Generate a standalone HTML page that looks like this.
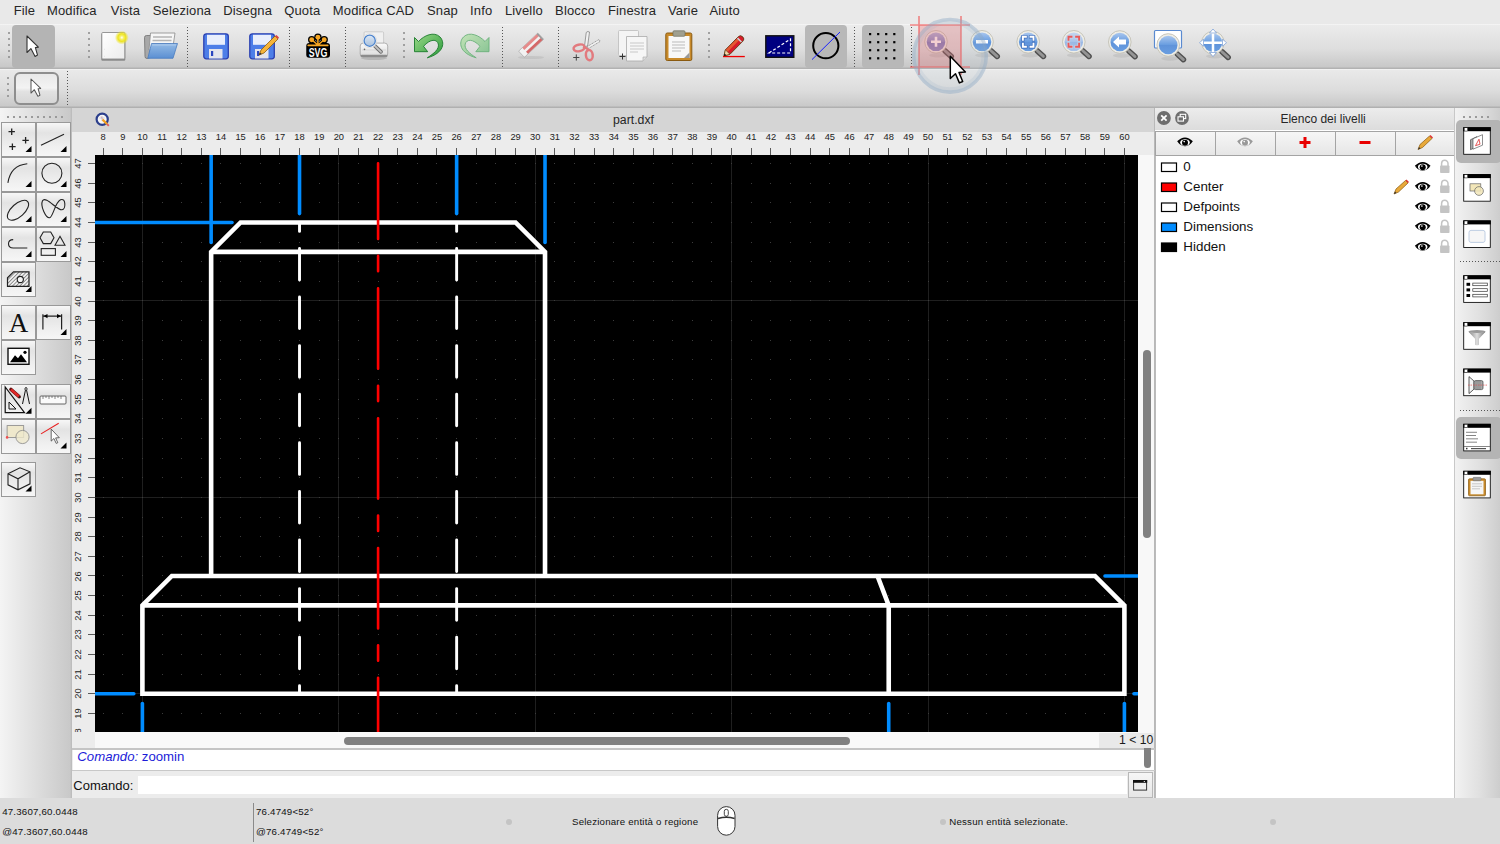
<!DOCTYPE html><html><head><meta charset="utf-8"><style>
*{margin:0;padding:0;box-sizing:border-box}
html,body{width:1500px;height:844px;overflow:hidden;background:#ececec;font-family:"Liberation Sans",sans-serif;color:#222}
.a{position:absolute}
svg{position:absolute;overflow:visible}
.menu span{position:absolute;top:3px;font-size:13px;color:#262626;white-space:nowrap;letter-spacing:0.15px}
</style></head><body><div class="a menu" style="left:0;top:0;width:1500px;height:24px;background:#e9e9e9"><span style="left:13.7px">File</span><span style="left:47.0px">Modifica</span><span style="left:110.8px">Vista</span><span style="left:152.8px">Seleziona</span><span style="left:223.3px">Disegna</span><span style="left:284.2px">Quota</span><span style="left:332.8px">Modifica CAD</span><span style="left:427.0px">Snap</span><span style="left:470.1px">Info</span><span style="left:504.9px">Livello</span><span style="left:555.1px">Blocco</span><span style="left:607.9px">Finestra</span><span style="left:667.9px">Varie</span><span style="left:709.5px">Aiuto</span></div><div class="a" style="left:0;top:24px;width:1500px;height:45px;background:linear-gradient(#f8f8f8 0,#ebebeb 1.5px,#dedede 25px,#c8c8c8 43px,#b2b2b2 44px)"></div><div class="a" style="left:0;top:69px;width:1500px;height:39px;background:linear-gradient(#f6f6f6 0,#e9e9e9 1.5px,#dcdcdc 22px,#c9c9c9 37px,#b0b0b0 38px)"></div><div class="a" style="left:7.5px;top:32.0px;width:2.0px;height:2.0px;background:#8a8a8a;border-radius:1px"></div><div class="a" style="left:7.5px;top:38.0px;width:2.0px;height:2.0px;background:#8a8a8a;border-radius:1px"></div><div class="a" style="left:7.5px;top:44.0px;width:2.0px;height:2.0px;background:#8a8a8a;border-radius:1px"></div><div class="a" style="left:7.5px;top:50.0px;width:2.0px;height:2.0px;background:#8a8a8a;border-radius:1px"></div><div class="a" style="left:7.5px;top:56.0px;width:2.0px;height:2.0px;background:#8a8a8a;border-radius:1px"></div><div class="a" style="left:87.8px;top:32.0px;width:2.0px;height:2.0px;background:#8a8a8a;border-radius:1px"></div><div class="a" style="left:87.8px;top:38.0px;width:2.0px;height:2.0px;background:#8a8a8a;border-radius:1px"></div><div class="a" style="left:87.8px;top:44.0px;width:2.0px;height:2.0px;background:#8a8a8a;border-radius:1px"></div><div class="a" style="left:87.8px;top:50.0px;width:2.0px;height:2.0px;background:#8a8a8a;border-radius:1px"></div><div class="a" style="left:87.8px;top:56.0px;width:2.0px;height:2.0px;background:#8a8a8a;border-radius:1px"></div><div class="a" style="left:187px;top:27px;width:1px;height:1px;background:#555"></div><div class="a" style="left:187px;top:30px;width:1px;height:1px;background:#555"></div><div class="a" style="left:187px;top:33px;width:1px;height:1px;background:#555"></div><div class="a" style="left:187px;top:36px;width:1px;height:1px;background:#555"></div><div class="a" style="left:187px;top:39px;width:1px;height:1px;background:#555"></div><div class="a" style="left:187px;top:42px;width:1px;height:1px;background:#555"></div><div class="a" style="left:187px;top:45px;width:1px;height:1px;background:#555"></div><div class="a" style="left:187px;top:48px;width:1px;height:1px;background:#555"></div><div class="a" style="left:187px;top:51px;width:1px;height:1px;background:#555"></div><div class="a" style="left:187px;top:54px;width:1px;height:1px;background:#555"></div><div class="a" style="left:187px;top:57px;width:1px;height:1px;background:#555"></div><div class="a" style="left:187px;top:60px;width:1px;height:1px;background:#555"></div><div class="a" style="left:187px;top:63px;width:1px;height:1px;background:#555"></div><div class="a" style="left:187px;top:66px;width:1px;height:1px;background:#555"></div><div class="a" style="left:289px;top:27px;width:1px;height:1px;background:#555"></div><div class="a" style="left:289px;top:30px;width:1px;height:1px;background:#555"></div><div class="a" style="left:289px;top:33px;width:1px;height:1px;background:#555"></div><div class="a" style="left:289px;top:36px;width:1px;height:1px;background:#555"></div><div class="a" style="left:289px;top:39px;width:1px;height:1px;background:#555"></div><div class="a" style="left:289px;top:42px;width:1px;height:1px;background:#555"></div><div class="a" style="left:289px;top:45px;width:1px;height:1px;background:#555"></div><div class="a" style="left:289px;top:48px;width:1px;height:1px;background:#555"></div><div class="a" style="left:289px;top:51px;width:1px;height:1px;background:#555"></div><div class="a" style="left:289px;top:54px;width:1px;height:1px;background:#555"></div><div class="a" style="left:289px;top:57px;width:1px;height:1px;background:#555"></div><div class="a" style="left:289px;top:60px;width:1px;height:1px;background:#555"></div><div class="a" style="left:289px;top:63px;width:1px;height:1px;background:#555"></div><div class="a" style="left:289px;top:66px;width:1px;height:1px;background:#555"></div><div class="a" style="left:345px;top:27px;width:1px;height:1px;background:#555"></div><div class="a" style="left:345px;top:30px;width:1px;height:1px;background:#555"></div><div class="a" style="left:345px;top:33px;width:1px;height:1px;background:#555"></div><div class="a" style="left:345px;top:36px;width:1px;height:1px;background:#555"></div><div class="a" style="left:345px;top:39px;width:1px;height:1px;background:#555"></div><div class="a" style="left:345px;top:42px;width:1px;height:1px;background:#555"></div><div class="a" style="left:345px;top:45px;width:1px;height:1px;background:#555"></div><div class="a" style="left:345px;top:48px;width:1px;height:1px;background:#555"></div><div class="a" style="left:345px;top:51px;width:1px;height:1px;background:#555"></div><div class="a" style="left:345px;top:54px;width:1px;height:1px;background:#555"></div><div class="a" style="left:345px;top:57px;width:1px;height:1px;background:#555"></div><div class="a" style="left:345px;top:60px;width:1px;height:1px;background:#555"></div><div class="a" style="left:345px;top:63px;width:1px;height:1px;background:#555"></div><div class="a" style="left:345px;top:66px;width:1px;height:1px;background:#555"></div><div class="a" style="left:402.6px;top:32.0px;width:2.0px;height:2.0px;background:#8a8a8a;border-radius:1px"></div><div class="a" style="left:402.6px;top:38.0px;width:2.0px;height:2.0px;background:#8a8a8a;border-radius:1px"></div><div class="a" style="left:402.6px;top:44.0px;width:2.0px;height:2.0px;background:#8a8a8a;border-radius:1px"></div><div class="a" style="left:402.6px;top:50.0px;width:2.0px;height:2.0px;background:#8a8a8a;border-radius:1px"></div><div class="a" style="left:402.6px;top:56.0px;width:2.0px;height:2.0px;background:#8a8a8a;border-radius:1px"></div><div class="a" style="left:502px;top:27px;width:1px;height:1px;background:#555"></div><div class="a" style="left:502px;top:30px;width:1px;height:1px;background:#555"></div><div class="a" style="left:502px;top:33px;width:1px;height:1px;background:#555"></div><div class="a" style="left:502px;top:36px;width:1px;height:1px;background:#555"></div><div class="a" style="left:502px;top:39px;width:1px;height:1px;background:#555"></div><div class="a" style="left:502px;top:42px;width:1px;height:1px;background:#555"></div><div class="a" style="left:502px;top:45px;width:1px;height:1px;background:#555"></div><div class="a" style="left:502px;top:48px;width:1px;height:1px;background:#555"></div><div class="a" style="left:502px;top:51px;width:1px;height:1px;background:#555"></div><div class="a" style="left:502px;top:54px;width:1px;height:1px;background:#555"></div><div class="a" style="left:502px;top:57px;width:1px;height:1px;background:#555"></div><div class="a" style="left:502px;top:60px;width:1px;height:1px;background:#555"></div><div class="a" style="left:502px;top:63px;width:1px;height:1px;background:#555"></div><div class="a" style="left:502px;top:66px;width:1px;height:1px;background:#555"></div><div class="a" style="left:558px;top:27px;width:1px;height:1px;background:#555"></div><div class="a" style="left:558px;top:30px;width:1px;height:1px;background:#555"></div><div class="a" style="left:558px;top:33px;width:1px;height:1px;background:#555"></div><div class="a" style="left:558px;top:36px;width:1px;height:1px;background:#555"></div><div class="a" style="left:558px;top:39px;width:1px;height:1px;background:#555"></div><div class="a" style="left:558px;top:42px;width:1px;height:1px;background:#555"></div><div class="a" style="left:558px;top:45px;width:1px;height:1px;background:#555"></div><div class="a" style="left:558px;top:48px;width:1px;height:1px;background:#555"></div><div class="a" style="left:558px;top:51px;width:1px;height:1px;background:#555"></div><div class="a" style="left:558px;top:54px;width:1px;height:1px;background:#555"></div><div class="a" style="left:558px;top:57px;width:1px;height:1px;background:#555"></div><div class="a" style="left:558px;top:60px;width:1px;height:1px;background:#555"></div><div class="a" style="left:558px;top:63px;width:1px;height:1px;background:#555"></div><div class="a" style="left:558px;top:66px;width:1px;height:1px;background:#555"></div><div class="a" style="left:708.0px;top:32.0px;width:2.0px;height:2.0px;background:#8a8a8a;border-radius:1px"></div><div class="a" style="left:708.0px;top:38.0px;width:2.0px;height:2.0px;background:#8a8a8a;border-radius:1px"></div><div class="a" style="left:708.0px;top:44.0px;width:2.0px;height:2.0px;background:#8a8a8a;border-radius:1px"></div><div class="a" style="left:708.0px;top:50.0px;width:2.0px;height:2.0px;background:#8a8a8a;border-radius:1px"></div><div class="a" style="left:708.0px;top:56.0px;width:2.0px;height:2.0px;background:#8a8a8a;border-radius:1px"></div><div class="a" style="left:854px;top:27px;width:1px;height:1px;background:#555"></div><div class="a" style="left:854px;top:30px;width:1px;height:1px;background:#555"></div><div class="a" style="left:854px;top:33px;width:1px;height:1px;background:#555"></div><div class="a" style="left:854px;top:36px;width:1px;height:1px;background:#555"></div><div class="a" style="left:854px;top:39px;width:1px;height:1px;background:#555"></div><div class="a" style="left:854px;top:42px;width:1px;height:1px;background:#555"></div><div class="a" style="left:854px;top:45px;width:1px;height:1px;background:#555"></div><div class="a" style="left:854px;top:48px;width:1px;height:1px;background:#555"></div><div class="a" style="left:854px;top:51px;width:1px;height:1px;background:#555"></div><div class="a" style="left:854px;top:54px;width:1px;height:1px;background:#555"></div><div class="a" style="left:854px;top:57px;width:1px;height:1px;background:#555"></div><div class="a" style="left:854px;top:60px;width:1px;height:1px;background:#555"></div><div class="a" style="left:854px;top:63px;width:1px;height:1px;background:#555"></div><div class="a" style="left:854px;top:66px;width:1px;height:1px;background:#555"></div><div class="a" style="left:911px;top:27px;width:1px;height:1px;background:#555"></div><div class="a" style="left:911px;top:30px;width:1px;height:1px;background:#555"></div><div class="a" style="left:911px;top:33px;width:1px;height:1px;background:#555"></div><div class="a" style="left:911px;top:36px;width:1px;height:1px;background:#555"></div><div class="a" style="left:911px;top:39px;width:1px;height:1px;background:#555"></div><div class="a" style="left:911px;top:42px;width:1px;height:1px;background:#555"></div><div class="a" style="left:911px;top:45px;width:1px;height:1px;background:#555"></div><div class="a" style="left:911px;top:48px;width:1px;height:1px;background:#555"></div><div class="a" style="left:911px;top:51px;width:1px;height:1px;background:#555"></div><div class="a" style="left:911px;top:54px;width:1px;height:1px;background:#555"></div><div class="a" style="left:911px;top:57px;width:1px;height:1px;background:#555"></div><div class="a" style="left:911px;top:60px;width:1px;height:1px;background:#555"></div><div class="a" style="left:911px;top:63px;width:1px;height:1px;background:#555"></div><div class="a" style="left:911px;top:66px;width:1px;height:1px;background:#555"></div><div class="a" style="left:6.9px;top:77.0px;width:2.0px;height:2.0px;background:#8a8a8a;border-radius:1px"></div><div class="a" style="left:6.9px;top:83.0px;width:2.0px;height:2.0px;background:#8a8a8a;border-radius:1px"></div><div class="a" style="left:6.9px;top:89.0px;width:2.0px;height:2.0px;background:#8a8a8a;border-radius:1px"></div><div class="a" style="left:6.9px;top:95.0px;width:2.0px;height:2.0px;background:#8a8a8a;border-radius:1px"></div><div class="a" style="left:67px;top:71px;width:1px;height:1px;background:#555"></div><div class="a" style="left:67px;top:74px;width:1px;height:1px;background:#555"></div><div class="a" style="left:67px;top:77px;width:1px;height:1px;background:#555"></div><div class="a" style="left:67px;top:80px;width:1px;height:1px;background:#555"></div><div class="a" style="left:67px;top:83px;width:1px;height:1px;background:#555"></div><div class="a" style="left:67px;top:86px;width:1px;height:1px;background:#555"></div><div class="a" style="left:67px;top:89px;width:1px;height:1px;background:#555"></div><div class="a" style="left:67px;top:92px;width:1px;height:1px;background:#555"></div><div class="a" style="left:67px;top:95px;width:1px;height:1px;background:#555"></div><div class="a" style="left:67px;top:98px;width:1px;height:1px;background:#555"></div><div class="a" style="left:67px;top:101px;width:1px;height:1px;background:#555"></div><div class="a" style="left:67px;top:104px;width:1px;height:1px;background:#555"></div><div class="a" style="left:12px;top:25px;width:43px;height:43px;background:#b4b4b4;border-radius:4px"></div><div class="a" style="left:805px;top:25px;width:42px;height:43px;background:#b8b8b8;border-radius:4px"></div><div class="a" style="left:862px;top:25px;width:42px;height:43px;background:#b8b8b8;border-radius:4px"></div><div class="a" style="left:14.2px;top:72px;width:44.6px;height:32.8px;border:2px solid #8e8e8e;border-radius:6px;background:linear-gradient(#e8e8e8,#f3f3f3 48%,#e2e2e2 60%,#d6d6d6)"></div><svg style="left:27.35px;top:35.65px" width="14" height="22"><path d="M0 0 V16.5 L3.9 12.6 L8.1 20.4 L10.5 19.1 L8.4 11.6 L11.4 11.1 Z" fill="#fff" stroke="#333" stroke-width="1.1" stroke-linejoin="round"/></svg><svg style="left:31.3px;top:79.2px" width="14" height="20"><g transform="scale(0.85)"><path d="M0 0 V16.5 L3.9 12.6 L8.1 20.4 L10.5 19.1 L8.4 11.6 L11.4 11.1 Z" fill="#fff" stroke="#555" stroke-width="1.2" stroke-linejoin="round"/></g></svg><svg style="left:100px;top:31px" width="30" height="31"><defs><linearGradient id="nd" x1="0" y1="0" x2="1" y2="1"><stop offset="0" stop-color="#ffffff"/><stop offset="1" stop-color="#ececec"/></linearGradient><radialGradient id="glow"><stop offset="0" stop-color="#ffffff"/><stop offset="0.25" stop-color="#f6f070"/><stop offset="0.55" stop-color="#eee420"/><stop offset="1" stop-color="#eee420" stop-opacity="0"/></radialGradient></defs><rect x="1.3" y="2.5" width="24" height="27.3" rx="1.2" fill="#8a8a8a"/><rect x="1.8" y="1.5" width="23" height="26.5" rx="1" fill="url(#nd)" stroke="#8c8c8c" stroke-width="0.9"/><path d="M4 18 l0.6 0.3 M4 25 l0.6 0.3" stroke="#bbb" stroke-width="0.5"/><circle cx="21.8" cy="6.6" r="7" fill="url(#glow)"/></svg><svg style="left:143px;top:30px" width="36" height="31"><defs><linearGradient id="fb" x1="0" y1="0" x2="0" y2="1"><stop offset="0" stop-color="#94bbe6"/><stop offset="1" stop-color="#5b8fd2"/></linearGradient></defs><path d="M1.5 7.5 Q1.5 5.5 3.5 5.5 H8 L9.5 4 V27 L4 28.5 Q2 28.5 2 26.5 Z" fill="#a8a8a8" stroke="#707070" stroke-width="0.8"/><path d="M7.5 3 H32 L29.5 20 H6 Z" fill="#f6f6f6" stroke="#8a8a8a" stroke-width="0.8"/><path d="M10 7 H29 M9.5 10.5 H28.5 M9 14 H28" stroke="#b4b4b4" stroke-width="1.6"/><path d="M8.5 13.5 H34.5 L30 28.3 H4.8 Z" fill="url(#fb)" stroke="#4a7cc0" stroke-width="0.8" stroke-linejoin="round"/><path d="M9.2 15 H33" stroke="#b8d2f0" stroke-width="0.8"/></svg><svg style="left:203px;top:33px" width="30" height="28"><rect x="0.8" y="0.8" width="24.5" height="25" rx="2.5" fill="#4d7ee8" stroke="#2a3fb0" stroke-width="1.3"/><rect x="4" y="1.8" width="18" height="10" fill="#e8eefc"/><rect x="6" y="16" width="13.5" height="9.5" fill="#e4e4ec"/><rect x="8" y="18" width="2.2" height="5" fill="#2a45c0"/></svg><svg style="left:249px;top:33px" width="30" height="28"><rect x="0.8" y="0.8" width="24.5" height="25" rx="2.5" fill="#4d7ee8" stroke="#2a3fb0" stroke-width="1.3"/><rect x="4" y="1.8" width="18" height="10" fill="#e8eefc"/><rect x="6" y="16" width="13.5" height="9.5" fill="#e4e4ec"/><rect x="8" y="18" width="2.2" height="5" fill="#2a45c0"/><path d="M10 22 L12 17 L26 3 L29 6 L15 20 Z" fill="#f5b43a" stroke="#8a5a10" stroke-width="0.8"/><path d="M26 3 L29 6 L30 4.5 L27.5 2 Z" fill="#e04040"/><path d="M10 22 L11 19.5 L12.8 21 Z" fill="#333"/></svg><svg style="left:305px;top:33px" width="26" height="26"><g stroke="#000" stroke-width="3" stroke-linecap="round"><line x1="12.9" y1="12" x2="6.7" y2="6.7"/><line x1="12.9" y1="12" x2="12.9" y2="4.3"/><line x1="12.9" y1="12" x2="19.2" y2="6.7"/></g><g fill="#000"><circle cx="6.7" cy="6.7" r="3.7"/><circle cx="12.9" cy="4.3" r="3.7"/><circle cx="19.2" cy="6.7" r="3.7"/></g><rect x="1.25" y="9.9" width="23.75" height="14.9" rx="3" fill="#000"/><g stroke="#f5a623" stroke-width="1.5" stroke-linecap="round"><line x1="12.9" y1="12" x2="6.7" y2="6.7"/><line x1="12.9" y1="12" x2="12.9" y2="4.3"/><line x1="12.9" y1="12" x2="19.2" y2="6.7"/></g><g fill="#f5a623"><circle cx="6.7" cy="6.7" r="2.45"/><circle cx="12.9" cy="4.3" r="2.45"/><circle cx="19.2" cy="6.7" r="2.45"/></g><path d="M3.2 12.4 H22.8" stroke="#f5a623" stroke-width="1.6" stroke-linecap="round"/><path d="M12.9 10 L9.5 12.4 H16.3 Z" fill="#f5a623"/><text x="13" y="23.6" font-family="Liberation Sans" font-weight="bold" font-size="13" fill="#fff" text-anchor="middle" textLength="18.7" lengthAdjust="spacingAndGlyphs">SVG</text></svg><svg style="left:355px;top:28px" width="36" height="34"><defs><linearGradient id="pb" x1="0" y1="0" x2="0" y2="1"><stop offset="0" stop-color="#fbfbfb"/><stop offset="1" stop-color="#d8d8d8"/></linearGradient><linearGradient id="mgl" x1="0" y1="0" x2="0" y2="1"><stop offset="0" stop-color="#dce8f6"/><stop offset="1" stop-color="#a8c0dc"/></linearGradient></defs><ellipse cx="19" cy="30" rx="13" ry="2" fill="#999" opacity="0.5"/><rect x="9.1" y="3.8" width="19.5" height="13.5" rx="1" fill="#f0f0f0" stroke="#c4c4c4" stroke-width="0.8"/><rect x="5.2" y="15.1" width="27.5" height="13.9" rx="3" fill="url(#pb)" stroke="#a0a0a0" stroke-width="0.8"/><path d="M7 22 H31" stroke="#cfcfcf" stroke-width="0.8"/><rect x="5.6" y="26.8" width="26.8" height="2.3" rx="1.1" fill="#8c8c8c"/><circle cx="9.5" cy="21.4" r="0.8" fill="#666"/><line x1="18.8" y1="16.8" x2="26" y2="23.8" stroke="#707070" stroke-width="3.8" stroke-linecap="round"/><line x1="18.8" y1="16.8" x2="26" y2="23.8" stroke="#c4c4c4" stroke-width="1.8" stroke-linecap="round"/><circle cx="14.7" cy="12.7" r="7" fill="#fafafa" stroke="#d0d0d0" stroke-width="0.6"/><circle cx="14.7" cy="12.7" r="5.6" fill="url(#mgl)" stroke="#4a82cc" stroke-width="1.3"/></svg><svg style="left:400px;top:25px" width="46" height="36"><defs><linearGradient id="ug" x1="0" y1="0" x2="1" y2="1"><stop offset="0" stop-color="#9ad888"/><stop offset="1" stop-color="#2a9a3a"/></linearGradient><linearGradient id="rg" x1="1" y1="0" x2="0" y2="1"><stop offset="0" stop-color="#c4e4b8"/><stop offset="1" stop-color="#82c090"/></linearGradient></defs><path d="M14.5 12.5 L18.5 16.5 C24 10.5 34 6 40 12 C45 17 44.5 28 27.3 32.8 C34 28.5 39.5 24 38.3 19 C37 14 30.5 13.5 23.5 21.3 L27.7 26.7 L14.5 26.7 Z" fill="url(#ug)" stroke="#1a7a2a" stroke-width="0.9" stroke-linejoin="round"/></svg><svg style="left:400px;top:25px" width="100" height="36"><g transform="translate(103.5,0) scale(-1,1)"><path d="M14.5 12.5 L18.5 16.5 C24 10.5 34 6 40 12 C45 17 44.5 28 27.3 32.8 C34 28.5 39.5 24 38.3 19 C37 14 30.5 13.5 23.5 21.3 L27.7 26.7 L14.5 26.7 Z" fill="url(#rg)" stroke="#6ab07a" stroke-width="0.9" stroke-linejoin="round"/></g></svg><svg style="left:512px;top:27px" width="40" height="36"><ellipse cx="19" cy="30.5" rx="13" ry="1.6" fill="#aaa" opacity="0.35"/><g transform="translate(19.1,18.2) rotate(-43.3)"><rect x="-13.2" y="-4.25" width="26.4" height="8.5" rx="0.8" fill="#f2f2f2" stroke="#a0a0a0" stroke-width="0.6"/><rect x="-8.2" y="-4.1" width="20.2" height="2.9" fill="#e58a8a"/><rect x="-8.2" y="1.3" width="20.2" height="2.8" fill="#d46868"/><rect x="11.6" y="-4.25" width="1.6" height="8.5" fill="#9a9a9a"/></g></svg><svg style="left:572px;top:30px" width="30" height="32"><path d="M12.5 16.5 L14.2 2.8 Q14.5 1.5 16 1.6 L17.5 2 L15.6 16 Z" fill="#f2f2f2" stroke="#777" stroke-width="0.7"/><path d="M15.3 16.5 L27 9.5 L28.3 11.3 L16.5 18.5 Z" fill="#f2f2f2" stroke="#777" stroke-width="0.7" stroke-dasharray="1.2 0.6"/><path d="M11 17 L15 18.5 L16.5 21" stroke="#e27a7e" stroke-width="2.4" fill="none"/><g fill="none" stroke="#e27a7e" stroke-width="2.5"><ellipse cx="7.1" cy="17.9" rx="5.6" ry="3.3" transform="rotate(-12 7.1 17.9)"/><ellipse cx="17.3" cy="25.1" rx="3.4" ry="5.2" transform="rotate(-6 17.3 25.1)"/></g><path d="M1.2 27.5 h6.2 M4.3 24.4 v6.2" stroke="#444" stroke-width="1"/></svg><svg style="left:618px;top:30px" width="32" height="32"><rect x="0.5" y="0.5" width="20" height="25" rx="1" fill="#f4f4f4" stroke="#bbb" stroke-width="0.8"/><path d="M8.5 6.5 H29 V27 L25 31 H8.5 Z" fill="#f6f6f6" stroke="#aaa" stroke-width="0.8"/><path d="M25 31 V27 H29" fill="#ddd" stroke="#aaa" stroke-width="0.6"/><g stroke="#c8c8c8" stroke-width="1"><path d="M12 13 h14 M12 16 h14 M12 19 h14 M12 22 h8"/></g><path d="M1.5 26.5 h6 M4.5 23.5 v6" stroke="#333" stroke-width="1"/></svg><svg style="left:665px;top:30px" width="28" height="31"><rect x="0.8" y="3" width="26" height="27.5" rx="1.5" fill="#c88a2a" stroke="#8a5a10" stroke-width="1"/><rect x="3.5" y="6" width="21" height="22" fill="#f8f8f8"/><path d="M19 28 L24.5 22.5 V28 Z" fill="#999"/><rect x="8" y="0.8" width="12" height="5.5" rx="1" fill="#a0a090" stroke="#707060" stroke-width="0.7"/><g stroke="#bbb" stroke-width="1"><path d="M7 12 h13 M7 15 h13 M7 18 h13 M7 21 h9"/></g></svg><svg style="left:718px;top:28px" width="34" height="34"><rect x="5" y="27.9" width="21.8" height="1.3" fill="#f00000"/><g transform="translate(15.3,18.35) rotate(-45.5)"><path d="M-13.2 0 L-8 -3.2 H10.5 Q13.4 -3.2 13.4 0 Q13.4 3.2 10.5 3.2 H-8 Z" fill="#d81c2a" stroke="#5a3a10" stroke-width="0.8" stroke-linejoin="round"/><rect x="-8" y="-2.8" width="16" height="2.6" fill="#e45a32"/><rect x="8" y="-2.8" width="1.6" height="5.6" fill="#cfcfcf"/><path d="M-13.2 0 L-8 -3.2 V3.2 Z" fill="#f2d8a8" stroke="#5a3a10" stroke-width="0.6" stroke-linejoin="round"/><path d="M-13.4 0 L-11.2 -1.35 V1.35 Z" fill="#111"/></g></svg><svg style="left:765px;top:35px" width="30" height="23"><rect x="0.8" y="0.8" width="28" height="21.5" fill="#000080" stroke="#111" stroke-width="1.4"/><path d="M4 18 L25.5 4 V18 Z" fill="none" stroke="#fff" stroke-width="1.2" stroke-dasharray="3 2"/></svg><svg style="left:811px;top:31px" width="30" height="30"><circle cx="14.8" cy="14.7" r="12.6" fill="none" stroke="#000" stroke-width="2"/><line x1="1" y1="28.6" x2="29" y2="1" stroke="#1a22ff" stroke-width="1"/></svg><svg style="left:0;top:0" width="1" height="1"><rect x="869.0" y="33.0" width="2.2" height="2.2" fill="#000"/><rect x="869.0" y="41.1" width="2.2" height="2.2" fill="#000"/><rect x="869.0" y="49.1" width="2.2" height="2.2" fill="#000"/><rect x="869.0" y="57.2" width="2.2" height="2.2" fill="#000"/><rect x="877.1" y="33.0" width="2.2" height="2.2" fill="#000"/><rect x="877.1" y="41.1" width="2.2" height="2.2" fill="#000"/><rect x="877.1" y="49.1" width="2.2" height="2.2" fill="#000"/><rect x="877.1" y="57.2" width="2.2" height="2.2" fill="#000"/><rect x="885.1" y="33.0" width="2.2" height="2.2" fill="#000"/><rect x="885.1" y="41.1" width="2.2" height="2.2" fill="#000"/><rect x="885.1" y="49.1" width="2.2" height="2.2" fill="#000"/><rect x="885.1" y="57.2" width="2.2" height="2.2" fill="#000"/><rect x="893.2" y="33.0" width="2.2" height="2.2" fill="#000"/><rect x="893.2" y="41.1" width="2.2" height="2.2" fill="#000"/><rect x="893.2" y="49.1" width="2.2" height="2.2" fill="#000"/><rect x="893.2" y="57.2" width="2.2" height="2.2" fill="#000"/></svg><svg style="left:0;top:0" width="1" height="1"><defs><linearGradient id="g936" x1="0" y1="0" x2="0" y2="1"><stop offset="0" stop-color="#b0b4dc"/><stop offset="0.48" stop-color="#8a8ec8"/><stop offset="0.52" stop-color="#7a7ec0"/><stop offset="1" stop-color="#8a8ec8"/></linearGradient></defs><ellipse cx="938" cy="55.3" rx="9" ry="2.2" fill="#000" opacity="0.07"/><line x1="945" y1="50.8" x2="951.2" y2="56.4" stroke="#505050" stroke-width="5.6" stroke-linecap="round"/><line x1="945" y1="50.8" x2="951.2" y2="56.4" stroke="#959595" stroke-width="2.8" stroke-linecap="round"/><circle cx="936" cy="41.8" r="11.3" fill="#eeede6" stroke="#c2c0b4" stroke-width="0.9"/><circle cx="936" cy="41.8" r="9.3" fill="url(#g936)"/><path d="M931 41.8 h10 M936 36.8 v10" stroke="#fff" stroke-width="2.6"/><defs><linearGradient id="g982" x1="0" y1="0" x2="0" y2="1"><stop offset="0" stop-color="#a9c6ee"/><stop offset="0.48" stop-color="#6a9ee0"/><stop offset="0.52" stop-color="#5f93da"/><stop offset="1" stop-color="#6a9ee0"/></linearGradient></defs><ellipse cx="984" cy="55.3" rx="9" ry="2.2" fill="#000" opacity="0.07"/><line x1="991" y1="50.8" x2="997.2" y2="56.4" stroke="#505050" stroke-width="5.6" stroke-linecap="round"/><line x1="991" y1="50.8" x2="997.2" y2="56.4" stroke="#959595" stroke-width="2.8" stroke-linecap="round"/><circle cx="982" cy="41.8" r="11.3" fill="#eeede6" stroke="#c2c0b4" stroke-width="0.9"/><circle cx="982" cy="41.8" r="9.3" fill="url(#g982)"/><rect x="976" y="40" width="12" height="3.5" fill="#fff"/><defs><linearGradient id="g1028" x1="0" y1="0" x2="0" y2="1"><stop offset="0" stop-color="#a9c6ee"/><stop offset="0.48" stop-color="#6a9ee0"/><stop offset="0.52" stop-color="#5f93da"/><stop offset="1" stop-color="#6a9ee0"/></linearGradient></defs><ellipse cx="1030.2" cy="55.3" rx="9" ry="2.2" fill="#000" opacity="0.07"/><line x1="1037.2" y1="50.8" x2="1043.4" y2="56.4" stroke="#505050" stroke-width="5.6" stroke-linecap="round"/><line x1="1037.2" y1="50.8" x2="1043.4" y2="56.4" stroke="#959595" stroke-width="2.8" stroke-linecap="round"/><circle cx="1028.2" cy="41.8" r="11.3" fill="#eeede6" stroke="#c2c0b4" stroke-width="0.9"/><circle cx="1028.2" cy="41.8" r="9.3" fill="url(#g1028)"/><path d="M1022.9000000000001 39.8 V36.8 H1025.9M1022.9000000000001 43.8 V46.8 H1025.9M1033.5 39.8 V36.8 H1030.5M1033.5 43.8 V46.8 H1030.5" fill="none" stroke="#3a6ab8" stroke-width="3.2" stroke-linecap="square"/><path d="M1022.9000000000001 39.8 V36.8 H1025.9M1022.9000000000001 43.8 V46.8 H1025.9M1033.5 39.8 V36.8 H1030.5M1033.5 43.8 V46.8 H1030.5" fill="none" stroke="#fff" stroke-width="1.9" stroke-linecap="square"/><defs><linearGradient id="g1073" x1="0" y1="0" x2="0" y2="1"><stop offset="0" stop-color="#c4d6f0"/><stop offset="0.48" stop-color="#aac4ea"/><stop offset="0.52" stop-color="#9ab8e4"/><stop offset="1" stop-color="#aac4ea"/></linearGradient></defs><ellipse cx="1075.8" cy="55.3" rx="9" ry="2.2" fill="#000" opacity="0.07"/><line x1="1082.8" y1="50.8" x2="1089.0" y2="56.4" stroke="#505050" stroke-width="5.6" stroke-linecap="round"/><line x1="1082.8" y1="50.8" x2="1089.0" y2="56.4" stroke="#959595" stroke-width="2.8" stroke-linecap="round"/><circle cx="1073.8" cy="41.8" r="11.3" fill="#eeede6" stroke="#c2c0b4" stroke-width="0.9"/><circle cx="1073.8" cy="41.8" r="9.3" fill="url(#g1073)"/><path d="M1068.5 39.8 V36.8 H1071.5M1068.5 43.8 V46.8 H1071.5M1079.1 39.8 V36.8 H1076.1M1079.1 43.8 V46.8 H1076.1" fill="none" stroke="#c8d4e8" stroke-width="3.2" stroke-linecap="square"/><path d="M1068.5 39.8 V36.8 H1071.5M1068.5 43.8 V46.8 H1071.5M1079.1 39.8 V36.8 H1076.1M1079.1 43.8 V46.8 H1076.1" fill="none" stroke="#e85a5a" stroke-width="1.9" stroke-linecap="square"/><defs><linearGradient id="g1119" x1="0" y1="0" x2="0" y2="1"><stop offset="0" stop-color="#a9c6ee"/><stop offset="0.48" stop-color="#6a9ee0"/><stop offset="0.52" stop-color="#5f93da"/><stop offset="1" stop-color="#6a9ee0"/></linearGradient></defs><ellipse cx="1121.8" cy="55.5" rx="9" ry="2.2" fill="#000" opacity="0.07"/><line x1="1128.8" y1="51" x2="1135.0" y2="56.6" stroke="#505050" stroke-width="5.6" stroke-linecap="round"/><line x1="1128.8" y1="51" x2="1135.0" y2="56.6" stroke="#959595" stroke-width="2.8" stroke-linecap="round"/><circle cx="1119.8" cy="42" r="11.3" fill="#eeede6" stroke="#c2c0b4" stroke-width="0.9"/><circle cx="1119.8" cy="42" r="9.3" fill="url(#g1119)"/><path d="M1113 42 L1119 36.5 V39.5 H1126 V44.5 H1119 V47.5 Z" fill="#fff"/><rect x="1154.5" y="30.5" width="27" height="17.5" rx="1" fill="#fff" stroke="#5a8ad0" stroke-width="1.2"/><defs><linearGradient id="g1168" x1="0" y1="0" x2="0" y2="1"><stop offset="0" stop-color="#a9c6ee"/><stop offset="0.48" stop-color="#6a9ee0"/><stop offset="0.52" stop-color="#5f93da"/><stop offset="1" stop-color="#6a9ee0"/></linearGradient></defs><ellipse cx="1170.2" cy="58.5" rx="9" ry="2.2" fill="#000" opacity="0.07"/><line x1="1177.2" y1="54" x2="1183.4" y2="59.6" stroke="#505050" stroke-width="5.6" stroke-linecap="round"/><line x1="1177.2" y1="54" x2="1183.4" y2="59.6" stroke="#959595" stroke-width="2.8" stroke-linecap="round"/><circle cx="1168.2" cy="45" r="11.3" fill="#eeede6" stroke="#c2c0b4" stroke-width="0.9"/><circle cx="1168.2" cy="45" r="9.3" fill="url(#g1168)"/><defs><linearGradient id="g1212" x1="0" y1="0" x2="0" y2="1"><stop offset="0" stop-color="#a9c6ee"/><stop offset="0.48" stop-color="#6a9ee0"/><stop offset="0.52" stop-color="#5f93da"/><stop offset="1" stop-color="#6a9ee0"/></linearGradient></defs><ellipse cx="1214.9" cy="56.2" rx="9" ry="2.2" fill="#000" opacity="0.07"/><line x1="1221.9" y1="51.7" x2="1228.1000000000001" y2="57.300000000000004" stroke="#505050" stroke-width="5.6" stroke-linecap="round"/><line x1="1221.9" y1="51.7" x2="1228.1000000000001" y2="57.300000000000004" stroke="#959595" stroke-width="2.8" stroke-linecap="round"/><circle cx="1212.9" cy="42.7" r="11.3" fill="#eeede6" stroke="#c2c0b4" stroke-width="0.9"/><circle cx="1212.9" cy="42.7" r="9.3" fill="url(#g1212)"/><path d="M1213 30 v25 M1200.5 42.7 h25" stroke="#fff" stroke-width="2.5"/><path d="M1213 29 l-3.5 4 h7 Z M1213 56.5 l-3.5 -4 h7 Z M1199.5 42.7 l4 -3.5 v7 Z M1226.5 42.7 l-4 -3.5 v7 Z" fill="#fff" stroke="#5a8ad0" stroke-width="0.6"/></svg><svg style="left:0;top:0" width="1" height="1"><rect x="919" y="25" width="42" height="42" fill="#ff3030" fill-opacity="0.22"/><g stroke="#f06060" stroke-width="1.6" opacity="0.75"><line x1="919" y1="16" x2="919" y2="75"/><line x1="961" y1="16" x2="961" y2="75"/><line x1="910" y1="25" x2="970" y2="25"/><line x1="910" y1="67" x2="970" y2="67"/></g><circle cx="950" cy="55.8" r="36.3" fill="#a8bccc" fill-opacity="0.14" stroke="#8aa8c4" stroke-opacity="0.42" stroke-width="3.6"/><circle cx="950" cy="55.8" r="33" fill="none" stroke="#8aa8c4" stroke-opacity="0.15" stroke-width="3"/><g transform="translate(950.3,56.3)"><path d="M0 0 V22.2 L5.2 17.4 L9.1 26.6 L12.4 25.2 L8.7 16.2 L15.1 15.8 Z" fill="#fff" stroke="#000" stroke-width="1.5" stroke-linejoin="round"/></g></svg><div class="a" style="left:0;top:108px;width:72px;height:690px;background:linear-gradient(90deg,#f4f4f4,#e2e2e2 40%,#c9c9c9 97%,#bdbdbd)"></div><div class="a" style="left:7px;top:116px;width:2px;height:2px;background:#9a9a9a"></div><div class="a" style="left:13px;top:116px;width:2px;height:2px;background:#9a9a9a"></div><div class="a" style="left:19px;top:116px;width:2px;height:2px;background:#9a9a9a"></div><div class="a" style="left:25px;top:116px;width:2px;height:2px;background:#9a9a9a"></div><div class="a" style="left:31px;top:116px;width:2px;height:2px;background:#9a9a9a"></div><div class="a" style="left:37px;top:116px;width:2px;height:2px;background:#9a9a9a"></div><div class="a" style="left:43px;top:116px;width:2px;height:2px;background:#9a9a9a"></div><div class="a" style="left:49px;top:116px;width:2px;height:2px;background:#9a9a9a"></div><div class="a" style="left:55px;top:116px;width:2px;height:2px;background:#9a9a9a"></div><div class="a" style="left:61px;top:116px;width:2px;height:2px;background:#9a9a9a"></div><div class="a" style="left:1px;top:122.3px;width:35px;height:35px;border:1.2px solid #999;background:linear-gradient(#f7f7f7,#e3e3e3 30%,#efefef 70%,#f6f6f6)"></div><div class="a" style="left:36px;top:122.3px;width:35px;height:35px;border:1.2px solid #999;background:linear-gradient(#f7f7f7,#e3e3e3 30%,#efefef 70%,#f6f6f6)"></div><div class="a" style="left:1px;top:157.3px;width:35px;height:35px;border:1.2px solid #999;background:linear-gradient(#f7f7f7,#e3e3e3 30%,#efefef 70%,#f6f6f6)"></div><div class="a" style="left:36px;top:157.3px;width:35px;height:35px;border:1.2px solid #999;background:linear-gradient(#f7f7f7,#e3e3e3 30%,#efefef 70%,#f6f6f6)"></div><div class="a" style="left:1px;top:192.3px;width:35px;height:35px;border:1.2px solid #999;background:linear-gradient(#f7f7f7,#e3e3e3 30%,#efefef 70%,#f6f6f6)"></div><div class="a" style="left:36px;top:192.3px;width:35px;height:35px;border:1.2px solid #999;background:linear-gradient(#f7f7f7,#e3e3e3 30%,#efefef 70%,#f6f6f6)"></div><div class="a" style="left:1px;top:227.3px;width:35px;height:35px;border:1.2px solid #999;background:linear-gradient(#f7f7f7,#e3e3e3 30%,#efefef 70%,#f6f6f6)"></div><div class="a" style="left:36px;top:227.3px;width:35px;height:35px;border:1.2px solid #999;background:linear-gradient(#f7f7f7,#e3e3e3 30%,#efefef 70%,#f6f6f6)"></div><div class="a" style="left:1px;top:262.3px;width:35px;height:35px;border:1.2px solid #999;background:linear-gradient(#f7f7f7,#e3e3e3 30%,#efefef 70%,#f6f6f6)"></div><div class="a" style="left:1px;top:305.3px;width:35px;height:35px;border:1.2px solid #999;background:linear-gradient(#f7f7f7,#e3e3e3 30%,#efefef 70%,#f6f6f6)"></div><div class="a" style="left:36px;top:305.3px;width:35px;height:35px;border:1.2px solid #999;background:linear-gradient(#f7f7f7,#e3e3e3 30%,#efefef 70%,#f6f6f6)"></div><div class="a" style="left:1px;top:340.3px;width:35px;height:35px;border:1.2px solid #999;background:linear-gradient(#f7f7f7,#e3e3e3 30%,#efefef 70%,#f6f6f6)"></div><div class="a" style="left:1px;top:384.0px;width:35px;height:35px;border:1.2px solid #999;background:linear-gradient(#f7f7f7,#e3e3e3 30%,#efefef 70%,#f6f6f6)"></div><div class="a" style="left:36px;top:384.0px;width:35px;height:35px;border:1.2px solid #999;background:linear-gradient(#f7f7f7,#e3e3e3 30%,#efefef 70%,#f6f6f6)"></div><div class="a" style="left:1px;top:418.8px;width:35px;height:35px;border:1.2px solid #999;background:linear-gradient(#f7f7f7,#e3e3e3 30%,#efefef 70%,#f6f6f6)"></div><div class="a" style="left:36px;top:418.8px;width:35px;height:35px;border:1.2px solid #999;background:linear-gradient(#f7f7f7,#e3e3e3 30%,#efefef 70%,#f6f6f6)"></div><div class="a" style="left:1px;top:461.8px;width:35px;height:35px;border:1.2px solid #999;background:linear-gradient(#f7f7f7,#e3e3e3 30%,#efefef 70%,#f6f6f6)"></div><svg style="left:0;top:0" width="1" height="1"><g fill="none" stroke="#222" stroke-width="1.1"><path d="M8.5 131.7 h6.4 M11.7 128.5 v6.4 M22.4 140.3 h6.4 M25.6 137.1 v6.4 M9.2 146.7 h6.4 M12.4 143.5 v6.4" stroke-width="1.3"/><path d="M25.5 152.1 L31.5 146.1 V152.1 Z" fill="#000" stroke="none"/><line x1="41" y1="145.3" x2="64" y2="134.3"/><path d="M60.5 152.1 L66.5 146.1 V152.1 Z" fill="#000" stroke="none"/><path d="M7.9 182.9 Q10.5 165.3 27.3 163.70000000000002"/><path d="M25.5 187.10000000000002 L31.5 181.10000000000002 V187.10000000000002 Z" fill="#000" stroke="none"/><circle cx="51.9" cy="173.3" r="10"/><path d="M60.5 187.10000000000002 L66.5 181.10000000000002 V187.10000000000002 Z" fill="#000" stroke="none"/><ellipse cx="18" cy="210.3" rx="13" ry="6.5" transform="rotate(-42 18 210.3)"/><path d="M25.5 222.10000000000002 L31.5 216.10000000000002 V222.10000000000002 Z" fill="#000" stroke="none"/><path d="M42.5 200.8 C40 206.3 46 218.3 49.6 217.8 C53 217.3 55 202.3 60.5 199.8 C66 197.3 66 209.3 62 209.8 C57 210.3 45.5 195.3 42.5 200.8 Z"/><path d="M60.5 222.10000000000002 L66.5 216.10000000000002 V222.10000000000002 Z" fill="#000" stroke="none"/><path d="M13.2 239.60000000000002 Q8.5 239.60000000000002 8.5 243.8 Q8.5 248.0 13.2 248.0 H27.3"/><path d="M25.5 257.1 L31.5 251.10000000000002 V257.1 Z" fill="#000" stroke="none"/><path d="M40 237.8 L43.3 232.0 H50.7 L54 237.8 L50.7 243.60000000000002 H43.3 Z"/><path d="M55 245.3 L60 236.3 L65 245.3 Z"/><rect x="41.2" y="248.60000000000002" width="14.2" height="6.7"/><path d="M60.5 257.1 L66.5 251.10000000000002 V257.1 Z" fill="#000" stroke="none"/><defs><pattern id="hat" width="2.6" height="2.6" patternUnits="userSpaceOnUse" patternTransform="rotate(45)"><rect width="2.6" height="2.6" fill="#f0f0f0" stroke="none"/><rect width="0.6" height="2.6" fill="#555" stroke="none"/></pattern></defs><path d="M7.5 286.3 V277.8 L13.5 271.8 H29 V286.3 Z" fill="url(#hat)" stroke-width="1.2"/><circle cx="20.3" cy="279.5" r="3.1" fill="#f4f4f4"/><path d="M25.5 292.1 L31.5 286.1 V292.1 Z" fill="#000" stroke="none"/><path d="M42.9 314.2 v15.4 M61.6 314.2 v15.4 M43.5 316.1 h17.5" stroke-width="1.2"/><path d="M43.5 316.1 l4 -2.2 v4.4 Z M61 316.1 l-4 -2.2 v4.4 Z" fill="#000" stroke="none"/><path d="M60.5 335.1 L66.5 329.1 V335.1 Z" fill="#000" stroke="none"/></g><text x="18.5" y="332.3" font-family="Liberation Serif" font-size="27" text-anchor="middle" fill="#111">A</text><rect x="8" y="348.3" width="21" height="16" fill="#fff" stroke="#111" stroke-width="1.4"/><path d="M10 362.3 L15 355.3 L18 358.3 L21 354.3 L27 362.3 Z" fill="#000"/><circle cx="25" cy="352.3" r="1.6" fill="#000"/><path d="M5.2 387.0 V412.6 H24.5 Z" fill="none" stroke="#111" stroke-width="1.2"/><path d="M9 402.0 V409.0 H16 Z" fill="none" stroke="#111" stroke-width="1"/><path d="M11 389.5 L19 396.5" stroke="#601010" stroke-width="3.6" stroke-linecap="round"/><path d="M11 389.5 L19 396.5" stroke="#e02828" stroke-width="2.4"/><path d="M19 396.5 l1.3 1.2" stroke="#222" stroke-width="1.5"/><path d="M26 387.5 L22.5 404.0 M26 387.5 L29.5 404.0" stroke="#111" stroke-width="1" fill="none"/><circle cx="26" cy="389.0" r="1.2" fill="#fff" stroke="#111" stroke-width="0.8"/><path d="M25.5 413.8 L31.5 407.8 V413.8 Z" fill="#000" stroke="none"/><rect x="40" y="396.0" width="26" height="8" rx="1" fill="#fafafa" stroke="#555" stroke-width="0.9"/><path d="M43 396.0 v3 M46 396.0 v2 M49 396.0 v3 M52 396.0 v2 M55 396.0 v3 M58 396.0 v2 M61 396.0 v3" stroke="#555" stroke-width="0.7"/><rect x="7.1" y="425.6" width="16.6" height="11.8" fill="#efe8cc" stroke="#888" stroke-width="0.8"/><circle cx="22.5" cy="437.0" r="6.6" fill="#efe8cc" fill-opacity="0.8" stroke="#888" stroke-width="0.8"/><circle cx="7.1" cy="437.40000000000003" r="1.3" fill="#f05050"/><line x1="41" y1="433.90000000000003" x2="58.7" y2="423.2" stroke="#e82020" stroke-width="1.1"/><path d="M51.2 429.1 V441.1 L53.9 438.5 L56.2 443.40000000000003 L57.8 442.7 L55.6 437.90000000000003 L59.3 437.7 Z" fill="#fff" stroke="#444" stroke-width="0.8"/><path d="M60.5 448.6 L66.5 442.6 V448.6 Z" fill="#000" stroke="none"/><path d="M8 473.8 L20 467.8 L30 471.8 V483.8 L18 489.8 L8 484.8 Z M8 473.8 L18 478.8 L30 471.8 M18 478.8 V489.8" fill="none" stroke="#222" stroke-width="1.1"/><path d="M25.5 491.6 L31.5 485.6 V491.6 Z" fill="#000" stroke="none"/></svg><div class="a" style="left:72px;top:108px;width:1083px;height:23.5px;background:#d5d5d5"></div><div class="a" style="left:70.5px;top:108px;width:1.5px;height:690px;background:#bdbdbd"></div><div class="a" style="left:613px;top:113px;font-size:12.3px;color:#262626">part.dxf</div><svg style="left:94px;top:110.5px" width="18" height="18"><circle cx="8.2" cy="8.2" r="5.6" fill="#f6f6f6" stroke="#2c3f8c" stroke-width="2.2"/><path d="M5.5 7 h5 M8 5 v5" stroke="#b8b8c8" stroke-width="0.7"/><path d="M7 5.5 l3 5" stroke="#e0a0a0" stroke-width="0.7"/><path d="M8.6 8.6 L13.2 13.2" stroke="#f0a020" stroke-width="2.2"/><path d="M13 13 L14.8 14.8" stroke="#e06060" stroke-width="1.8"/></svg><div class="a" style="left:72px;top:131.5px;width:1083px;height:23.5px;background:#ececec"></div><div class="a" style="left:72px;top:155px;width:23px;height:593px;background:#ececec"></div><div class="a" style="left:1138px;top:155px;width:16px;height:593px;background:#f8f8f8"></div><div class="a" style="left:1143.2px;top:349.6px;width:7.6px;height:188px;background:#808080;border-radius:4px"></div><div class="a" style="left:95px;top:732px;width:1043px;height:16px;background:#f8f8f8"></div><div class="a" style="left:344px;top:737px;width:506px;height:8px;background:#808080;border-radius:4px"></div><div class="a" style="left:1099px;top:732.5px;width:55px;height:15.5px;background:#e9e9e9"></div><div class="a" style="left:1119px;top:733px;font-size:12.2px;color:#1a1a1a">1 &lt; 10</div><div class="a" style="left:1153.5px;top:108px;width:1.8px;height:690px;background:#b8b8b8"></div><div class="a" style="left:103px;top:148px;width:1px;height:7px;background:#5a5a5a"></div><div class="a" style="left:93.1px;top:132.2px;width:20px;text-align:center;font-size:9.3px;color:#222">8</div><div class="a" style="left:122px;top:148px;width:1px;height:7px;background:#5a5a5a"></div><div class="a" style="left:112.8px;top:132.2px;width:20px;text-align:center;font-size:9.3px;color:#222">9</div><div class="a" style="left:142px;top:148px;width:1px;height:7px;background:#5a5a5a"></div><div class="a" style="left:132.4px;top:132.2px;width:20px;text-align:center;font-size:9.3px;color:#222">10</div><div class="a" style="left:162px;top:148px;width:1px;height:7px;background:#5a5a5a"></div><div class="a" style="left:152.0px;top:132.2px;width:20px;text-align:center;font-size:9.3px;color:#222">11</div><div class="a" style="left:181px;top:148px;width:1px;height:7px;background:#5a5a5a"></div><div class="a" style="left:171.7px;top:132.2px;width:20px;text-align:center;font-size:9.3px;color:#222">12</div><div class="a" style="left:201px;top:148px;width:1px;height:7px;background:#5a5a5a"></div><div class="a" style="left:191.3px;top:132.2px;width:20px;text-align:center;font-size:9.3px;color:#222">13</div><div class="a" style="left:220px;top:148px;width:1px;height:7px;background:#5a5a5a"></div><div class="a" style="left:211.0px;top:132.2px;width:20px;text-align:center;font-size:9.3px;color:#222">14</div><div class="a" style="left:240px;top:148px;width:1px;height:7px;background:#5a5a5a"></div><div class="a" style="left:230.6px;top:132.2px;width:20px;text-align:center;font-size:9.3px;color:#222">15</div><div class="a" style="left:260px;top:148px;width:1px;height:7px;background:#5a5a5a"></div><div class="a" style="left:250.2px;top:132.2px;width:20px;text-align:center;font-size:9.3px;color:#222">16</div><div class="a" style="left:279px;top:148px;width:1px;height:7px;background:#5a5a5a"></div><div class="a" style="left:269.9px;top:132.2px;width:20px;text-align:center;font-size:9.3px;color:#222">17</div><div class="a" style="left:299px;top:148px;width:1px;height:7px;background:#5a5a5a"></div><div class="a" style="left:289.5px;top:132.2px;width:20px;text-align:center;font-size:9.3px;color:#222">18</div><div class="a" style="left:319px;top:148px;width:1px;height:7px;background:#5a5a5a"></div><div class="a" style="left:309.2px;top:132.2px;width:20px;text-align:center;font-size:9.3px;color:#222">19</div><div class="a" style="left:338px;top:148px;width:1px;height:7px;background:#5a5a5a"></div><div class="a" style="left:328.8px;top:132.2px;width:20px;text-align:center;font-size:9.3px;color:#222">20</div><div class="a" style="left:358px;top:148px;width:1px;height:7px;background:#5a5a5a"></div><div class="a" style="left:348.4px;top:132.2px;width:20px;text-align:center;font-size:9.3px;color:#222">21</div><div class="a" style="left:378px;top:148px;width:1px;height:7px;background:#5a5a5a"></div><div class="a" style="left:368.1px;top:132.2px;width:20px;text-align:center;font-size:9.3px;color:#222">22</div><div class="a" style="left:397px;top:148px;width:1px;height:7px;background:#5a5a5a"></div><div class="a" style="left:387.7px;top:132.2px;width:20px;text-align:center;font-size:9.3px;color:#222">23</div><div class="a" style="left:417px;top:148px;width:1px;height:7px;background:#5a5a5a"></div><div class="a" style="left:407.4px;top:132.2px;width:20px;text-align:center;font-size:9.3px;color:#222">24</div><div class="a" style="left:436px;top:148px;width:1px;height:7px;background:#5a5a5a"></div><div class="a" style="left:427.0px;top:132.2px;width:20px;text-align:center;font-size:9.3px;color:#222">25</div><div class="a" style="left:456px;top:148px;width:1px;height:7px;background:#5a5a5a"></div><div class="a" style="left:446.6px;top:132.2px;width:20px;text-align:center;font-size:9.3px;color:#222">26</div><div class="a" style="left:476px;top:148px;width:1px;height:7px;background:#5a5a5a"></div><div class="a" style="left:466.3px;top:132.2px;width:20px;text-align:center;font-size:9.3px;color:#222">27</div><div class="a" style="left:495px;top:148px;width:1px;height:7px;background:#5a5a5a"></div><div class="a" style="left:485.9px;top:132.2px;width:20px;text-align:center;font-size:9.3px;color:#222">28</div><div class="a" style="left:515px;top:148px;width:1px;height:7px;background:#5a5a5a"></div><div class="a" style="left:505.6px;top:132.2px;width:20px;text-align:center;font-size:9.3px;color:#222">29</div><div class="a" style="left:535px;top:148px;width:1px;height:7px;background:#5a5a5a"></div><div class="a" style="left:525.2px;top:132.2px;width:20px;text-align:center;font-size:9.3px;color:#222">30</div><div class="a" style="left:554px;top:148px;width:1px;height:7px;background:#5a5a5a"></div><div class="a" style="left:544.8px;top:132.2px;width:20px;text-align:center;font-size:9.3px;color:#222">31</div><div class="a" style="left:574px;top:148px;width:1px;height:7px;background:#5a5a5a"></div><div class="a" style="left:564.5px;top:132.2px;width:20px;text-align:center;font-size:9.3px;color:#222">32</div><div class="a" style="left:594px;top:148px;width:1px;height:7px;background:#5a5a5a"></div><div class="a" style="left:584.1px;top:132.2px;width:20px;text-align:center;font-size:9.3px;color:#222">33</div><div class="a" style="left:613px;top:148px;width:1px;height:7px;background:#5a5a5a"></div><div class="a" style="left:603.8px;top:132.2px;width:20px;text-align:center;font-size:9.3px;color:#222">34</div><div class="a" style="left:633px;top:148px;width:1px;height:7px;background:#5a5a5a"></div><div class="a" style="left:623.4px;top:132.2px;width:20px;text-align:center;font-size:9.3px;color:#222">35</div><div class="a" style="left:653px;top:148px;width:1px;height:7px;background:#5a5a5a"></div><div class="a" style="left:643.0px;top:132.2px;width:20px;text-align:center;font-size:9.3px;color:#222">36</div><div class="a" style="left:672px;top:148px;width:1px;height:7px;background:#5a5a5a"></div><div class="a" style="left:662.7px;top:132.2px;width:20px;text-align:center;font-size:9.3px;color:#222">37</div><div class="a" style="left:692px;top:148px;width:1px;height:7px;background:#5a5a5a"></div><div class="a" style="left:682.3px;top:132.2px;width:20px;text-align:center;font-size:9.3px;color:#222">38</div><div class="a" style="left:711px;top:148px;width:1px;height:7px;background:#5a5a5a"></div><div class="a" style="left:702.0px;top:132.2px;width:20px;text-align:center;font-size:9.3px;color:#222">39</div><div class="a" style="left:731px;top:148px;width:1px;height:7px;background:#5a5a5a"></div><div class="a" style="left:721.6px;top:132.2px;width:20px;text-align:center;font-size:9.3px;color:#222">40</div><div class="a" style="left:751px;top:148px;width:1px;height:7px;background:#5a5a5a"></div><div class="a" style="left:741.2px;top:132.2px;width:20px;text-align:center;font-size:9.3px;color:#222">41</div><div class="a" style="left:770px;top:148px;width:1px;height:7px;background:#5a5a5a"></div><div class="a" style="left:760.9px;top:132.2px;width:20px;text-align:center;font-size:9.3px;color:#222">42</div><div class="a" style="left:790px;top:148px;width:1px;height:7px;background:#5a5a5a"></div><div class="a" style="left:780.5px;top:132.2px;width:20px;text-align:center;font-size:9.3px;color:#222">43</div><div class="a" style="left:810px;top:148px;width:1px;height:7px;background:#5a5a5a"></div><div class="a" style="left:800.2px;top:132.2px;width:20px;text-align:center;font-size:9.3px;color:#222">44</div><div class="a" style="left:829px;top:148px;width:1px;height:7px;background:#5a5a5a"></div><div class="a" style="left:819.8px;top:132.2px;width:20px;text-align:center;font-size:9.3px;color:#222">45</div><div class="a" style="left:849px;top:148px;width:1px;height:7px;background:#5a5a5a"></div><div class="a" style="left:839.4px;top:132.2px;width:20px;text-align:center;font-size:9.3px;color:#222">46</div><div class="a" style="left:869px;top:148px;width:1px;height:7px;background:#5a5a5a"></div><div class="a" style="left:859.1px;top:132.2px;width:20px;text-align:center;font-size:9.3px;color:#222">47</div><div class="a" style="left:888px;top:148px;width:1px;height:7px;background:#5a5a5a"></div><div class="a" style="left:878.7px;top:132.2px;width:20px;text-align:center;font-size:9.3px;color:#222">48</div><div class="a" style="left:908px;top:148px;width:1px;height:7px;background:#5a5a5a"></div><div class="a" style="left:898.4px;top:132.2px;width:20px;text-align:center;font-size:9.3px;color:#222">49</div><div class="a" style="left:928px;top:148px;width:1px;height:7px;background:#5a5a5a"></div><div class="a" style="left:918.0px;top:132.2px;width:20px;text-align:center;font-size:9.3px;color:#222">50</div><div class="a" style="left:947px;top:148px;width:1px;height:7px;background:#5a5a5a"></div><div class="a" style="left:937.6px;top:132.2px;width:20px;text-align:center;font-size:9.3px;color:#222">51</div><div class="a" style="left:967px;top:148px;width:1px;height:7px;background:#5a5a5a"></div><div class="a" style="left:957.3px;top:132.2px;width:20px;text-align:center;font-size:9.3px;color:#222">52</div><div class="a" style="left:986px;top:148px;width:1px;height:7px;background:#5a5a5a"></div><div class="a" style="left:976.9px;top:132.2px;width:20px;text-align:center;font-size:9.3px;color:#222">53</div><div class="a" style="left:1006px;top:148px;width:1px;height:7px;background:#5a5a5a"></div><div class="a" style="left:996.6px;top:132.2px;width:20px;text-align:center;font-size:9.3px;color:#222">54</div><div class="a" style="left:1026px;top:148px;width:1px;height:7px;background:#5a5a5a"></div><div class="a" style="left:1016.2px;top:132.2px;width:20px;text-align:center;font-size:9.3px;color:#222">55</div><div class="a" style="left:1045px;top:148px;width:1px;height:7px;background:#5a5a5a"></div><div class="a" style="left:1035.8px;top:132.2px;width:20px;text-align:center;font-size:9.3px;color:#222">56</div><div class="a" style="left:1065px;top:148px;width:1px;height:7px;background:#5a5a5a"></div><div class="a" style="left:1055.5px;top:132.2px;width:20px;text-align:center;font-size:9.3px;color:#222">57</div><div class="a" style="left:1085px;top:148px;width:1px;height:7px;background:#5a5a5a"></div><div class="a" style="left:1075.1px;top:132.2px;width:20px;text-align:center;font-size:9.3px;color:#222">58</div><div class="a" style="left:1104px;top:148px;width:1px;height:7px;background:#5a5a5a"></div><div class="a" style="left:1094.8px;top:132.2px;width:20px;text-align:center;font-size:9.3px;color:#222">59</div><div class="a" style="left:1124px;top:148px;width:1px;height:7px;background:#5a5a5a"></div><div class="a" style="left:1114.4px;top:132.2px;width:20px;text-align:center;font-size:9.3px;color:#222">60</div><div class="a" style="left:72px;top:155px;width:23px;height:577px;overflow:hidden"><div class="a" style="left:16px;top:578px;width:7px;height:1px;background:#5a5a5a"></div><div class="a" style="left:-4px;top:572.6px;width:20px;height:11px;text-align:center;font-size:9.3px;line-height:11px;color:#222;transform:rotate(-90deg)">18</div><div class="a" style="left:16px;top:558px;width:7px;height:1px;background:#5a5a5a"></div><div class="a" style="left:-4px;top:552.9px;width:20px;height:11px;text-align:center;font-size:9.3px;line-height:11px;color:#222;transform:rotate(-90deg)">19</div><div class="a" style="left:16px;top:538px;width:7px;height:1px;background:#5a5a5a"></div><div class="a" style="left:-4px;top:533.3px;width:20px;height:11px;text-align:center;font-size:9.3px;line-height:11px;color:#222;transform:rotate(-90deg)">20</div><div class="a" style="left:16px;top:519px;width:7px;height:1px;background:#5a5a5a"></div><div class="a" style="left:-4px;top:513.7px;width:20px;height:11px;text-align:center;font-size:9.3px;line-height:11px;color:#222;transform:rotate(-90deg)">21</div><div class="a" style="left:16px;top:499px;width:7px;height:1px;background:#5a5a5a"></div><div class="a" style="left:-4px;top:494.0px;width:20px;height:11px;text-align:center;font-size:9.3px;line-height:11px;color:#222;transform:rotate(-90deg)">22</div><div class="a" style="left:16px;top:479px;width:7px;height:1px;background:#5a5a5a"></div><div class="a" style="left:-4px;top:474.4px;width:20px;height:11px;text-align:center;font-size:9.3px;line-height:11px;color:#222;transform:rotate(-90deg)">23</div><div class="a" style="left:16px;top:460px;width:7px;height:1px;background:#5a5a5a"></div><div class="a" style="left:-4px;top:454.7px;width:20px;height:11px;text-align:center;font-size:9.3px;line-height:11px;color:#222;transform:rotate(-90deg)">24</div><div class="a" style="left:16px;top:440px;width:7px;height:1px;background:#5a5a5a"></div><div class="a" style="left:-4px;top:435.1px;width:20px;height:11px;text-align:center;font-size:9.3px;line-height:11px;color:#222;transform:rotate(-90deg)">25</div><div class="a" style="left:16px;top:420px;width:7px;height:1px;background:#5a5a5a"></div><div class="a" style="left:-4px;top:415.5px;width:20px;height:11px;text-align:center;font-size:9.3px;line-height:11px;color:#222;transform:rotate(-90deg)">26</div><div class="a" style="left:16px;top:401px;width:7px;height:1px;background:#5a5a5a"></div><div class="a" style="left:-4px;top:395.8px;width:20px;height:11px;text-align:center;font-size:9.3px;line-height:11px;color:#222;transform:rotate(-90deg)">27</div><div class="a" style="left:16px;top:381px;width:7px;height:1px;background:#5a5a5a"></div><div class="a" style="left:-4px;top:376.2px;width:20px;height:11px;text-align:center;font-size:9.3px;line-height:11px;color:#222;transform:rotate(-90deg)">28</div><div class="a" style="left:16px;top:362px;width:7px;height:1px;background:#5a5a5a"></div><div class="a" style="left:-4px;top:356.5px;width:20px;height:11px;text-align:center;font-size:9.3px;line-height:11px;color:#222;transform:rotate(-90deg)">29</div><div class="a" style="left:16px;top:342px;width:7px;height:1px;background:#5a5a5a"></div><div class="a" style="left:-4px;top:336.9px;width:20px;height:11px;text-align:center;font-size:9.3px;line-height:11px;color:#222;transform:rotate(-90deg)">30</div><div class="a" style="left:16px;top:322px;width:7px;height:1px;background:#5a5a5a"></div><div class="a" style="left:-4px;top:317.3px;width:20px;height:11px;text-align:center;font-size:9.3px;line-height:11px;color:#222;transform:rotate(-90deg)">31</div><div class="a" style="left:16px;top:303px;width:7px;height:1px;background:#5a5a5a"></div><div class="a" style="left:-4px;top:297.6px;width:20px;height:11px;text-align:center;font-size:9.3px;line-height:11px;color:#222;transform:rotate(-90deg)">32</div><div class="a" style="left:16px;top:283px;width:7px;height:1px;background:#5a5a5a"></div><div class="a" style="left:-4px;top:278.0px;width:20px;height:11px;text-align:center;font-size:9.3px;line-height:11px;color:#222;transform:rotate(-90deg)">33</div><div class="a" style="left:16px;top:263px;width:7px;height:1px;background:#5a5a5a"></div><div class="a" style="left:-4px;top:258.3px;width:20px;height:11px;text-align:center;font-size:9.3px;line-height:11px;color:#222;transform:rotate(-90deg)">34</div><div class="a" style="left:16px;top:244px;width:7px;height:1px;background:#5a5a5a"></div><div class="a" style="left:-4px;top:238.7px;width:20px;height:11px;text-align:center;font-size:9.3px;line-height:11px;color:#222;transform:rotate(-90deg)">35</div><div class="a" style="left:16px;top:224px;width:7px;height:1px;background:#5a5a5a"></div><div class="a" style="left:-4px;top:219.1px;width:20px;height:11px;text-align:center;font-size:9.3px;line-height:11px;color:#222;transform:rotate(-90deg)">36</div><div class="a" style="left:16px;top:204px;width:7px;height:1px;background:#5a5a5a"></div><div class="a" style="left:-4px;top:199.4px;width:20px;height:11px;text-align:center;font-size:9.3px;line-height:11px;color:#222;transform:rotate(-90deg)">37</div><div class="a" style="left:16px;top:185px;width:7px;height:1px;background:#5a5a5a"></div><div class="a" style="left:-4px;top:179.8px;width:20px;height:11px;text-align:center;font-size:9.3px;line-height:11px;color:#222;transform:rotate(-90deg)">38</div><div class="a" style="left:16px;top:165px;width:7px;height:1px;background:#5a5a5a"></div><div class="a" style="left:-4px;top:160.1px;width:20px;height:11px;text-align:center;font-size:9.3px;line-height:11px;color:#222;transform:rotate(-90deg)">39</div><div class="a" style="left:16px;top:146px;width:7px;height:1px;background:#5a5a5a"></div><div class="a" style="left:-4px;top:140.5px;width:20px;height:11px;text-align:center;font-size:9.3px;line-height:11px;color:#222;transform:rotate(-90deg)">40</div><div class="a" style="left:16px;top:126px;width:7px;height:1px;background:#5a5a5a"></div><div class="a" style="left:-4px;top:120.9px;width:20px;height:11px;text-align:center;font-size:9.3px;line-height:11px;color:#222;transform:rotate(-90deg)">41</div><div class="a" style="left:16px;top:106px;width:7px;height:1px;background:#5a5a5a"></div><div class="a" style="left:-4px;top:101.2px;width:20px;height:11px;text-align:center;font-size:9.3px;line-height:11px;color:#222;transform:rotate(-90deg)">42</div><div class="a" style="left:16px;top:87px;width:7px;height:1px;background:#5a5a5a"></div><div class="a" style="left:-4px;top:81.6px;width:20px;height:11px;text-align:center;font-size:9.3px;line-height:11px;color:#222;transform:rotate(-90deg)">43</div><div class="a" style="left:16px;top:67px;width:7px;height:1px;background:#5a5a5a"></div><div class="a" style="left:-4px;top:61.9px;width:20px;height:11px;text-align:center;font-size:9.3px;line-height:11px;color:#222;transform:rotate(-90deg)">44</div><div class="a" style="left:16px;top:47px;width:7px;height:1px;background:#5a5a5a"></div><div class="a" style="left:-4px;top:42.3px;width:20px;height:11px;text-align:center;font-size:9.3px;line-height:11px;color:#222;transform:rotate(-90deg)">45</div><div class="a" style="left:16px;top:28px;width:7px;height:1px;background:#5a5a5a"></div><div class="a" style="left:-4px;top:22.7px;width:20px;height:11px;text-align:center;font-size:9.3px;line-height:11px;color:#222;transform:rotate(-90deg)">46</div><div class="a" style="left:16px;top:8px;width:7px;height:1px;background:#5a5a5a"></div><div class="a" style="left:-4px;top:3.0px;width:20px;height:11px;text-align:center;font-size:9.3px;line-height:11px;color:#222;transform:rotate(-90deg)">47</div></div><svg style="left:95px;top:155px;overflow:hidden" width="1043" height="577" viewBox="95 155 1043 577"><rect x="95" y="155" width="1043" height="577" fill="#000"/><rect x="142" y="155" width="1" height="577" fill="#1f1f1f"/><rect x="338" y="155" width="1" height="577" fill="#1f1f1f"/><rect x="535" y="155" width="1" height="577" fill="#1f1f1f"/><rect x="731" y="155" width="1" height="577" fill="#1f1f1f"/><rect x="928" y="155" width="1" height="577" fill="#1f1f1f"/><rect x="1124" y="155" width="1" height="577" fill="#1f1f1f"/><rect x="95" y="693" width="1043" height="1" fill="#1f1f1f"/><rect x="95" y="497" width="1043" height="1" fill="#1f1f1f"/><rect x="95" y="300" width="1043" height="1" fill="#1f1f1f"/><path d="M103 713h1v1h-1zM103 693h1v1h-1zM103 674h1v1h-1zM103 654h1v1h-1zM103 634h1v1h-1zM103 615h1v1h-1zM103 595h1v1h-1zM103 575h1v1h-1zM103 556h1v1h-1zM103 536h1v1h-1zM103 517h1v1h-1zM103 497h1v1h-1zM103 477h1v1h-1zM103 458h1v1h-1zM103 438h1v1h-1zM103 418h1v1h-1zM103 399h1v1h-1zM103 379h1v1h-1zM103 359h1v1h-1zM103 340h1v1h-1zM103 320h1v1h-1zM103 300h1v1h-1zM103 281h1v1h-1zM103 261h1v1h-1zM103 242h1v1h-1zM103 222h1v1h-1zM103 202h1v1h-1zM103 183h1v1h-1zM103 163h1v1h-1zM122 713h1v1h-1zM122 693h1v1h-1zM122 674h1v1h-1zM122 654h1v1h-1zM122 634h1v1h-1zM122 615h1v1h-1zM122 595h1v1h-1zM122 575h1v1h-1zM122 556h1v1h-1zM122 536h1v1h-1zM122 517h1v1h-1zM122 497h1v1h-1zM122 477h1v1h-1zM122 458h1v1h-1zM122 438h1v1h-1zM122 418h1v1h-1zM122 399h1v1h-1zM122 379h1v1h-1zM122 359h1v1h-1zM122 340h1v1h-1zM122 320h1v1h-1zM122 300h1v1h-1zM122 281h1v1h-1zM122 261h1v1h-1zM122 242h1v1h-1zM122 222h1v1h-1zM122 202h1v1h-1zM122 183h1v1h-1zM122 163h1v1h-1zM142 713h1v1h-1zM142 693h1v1h-1zM142 674h1v1h-1zM142 654h1v1h-1zM142 634h1v1h-1zM142 615h1v1h-1zM142 595h1v1h-1zM142 575h1v1h-1zM142 556h1v1h-1zM142 536h1v1h-1zM142 517h1v1h-1zM142 497h1v1h-1zM142 477h1v1h-1zM142 458h1v1h-1zM142 438h1v1h-1zM142 418h1v1h-1zM142 399h1v1h-1zM142 379h1v1h-1zM142 359h1v1h-1zM142 340h1v1h-1zM142 320h1v1h-1zM142 300h1v1h-1zM142 281h1v1h-1zM142 261h1v1h-1zM142 242h1v1h-1zM142 222h1v1h-1zM142 202h1v1h-1zM142 183h1v1h-1zM142 163h1v1h-1zM162 713h1v1h-1zM162 693h1v1h-1zM162 674h1v1h-1zM162 654h1v1h-1zM162 634h1v1h-1zM162 615h1v1h-1zM162 595h1v1h-1zM162 575h1v1h-1zM162 556h1v1h-1zM162 536h1v1h-1zM162 517h1v1h-1zM162 497h1v1h-1zM162 477h1v1h-1zM162 458h1v1h-1zM162 438h1v1h-1zM162 418h1v1h-1zM162 399h1v1h-1zM162 379h1v1h-1zM162 359h1v1h-1zM162 340h1v1h-1zM162 320h1v1h-1zM162 300h1v1h-1zM162 281h1v1h-1zM162 261h1v1h-1zM162 242h1v1h-1zM162 222h1v1h-1zM162 202h1v1h-1zM162 183h1v1h-1zM162 163h1v1h-1zM181 713h1v1h-1zM181 693h1v1h-1zM181 674h1v1h-1zM181 654h1v1h-1zM181 634h1v1h-1zM181 615h1v1h-1zM181 595h1v1h-1zM181 575h1v1h-1zM181 556h1v1h-1zM181 536h1v1h-1zM181 517h1v1h-1zM181 497h1v1h-1zM181 477h1v1h-1zM181 458h1v1h-1zM181 438h1v1h-1zM181 418h1v1h-1zM181 399h1v1h-1zM181 379h1v1h-1zM181 359h1v1h-1zM181 340h1v1h-1zM181 320h1v1h-1zM181 300h1v1h-1zM181 281h1v1h-1zM181 261h1v1h-1zM181 242h1v1h-1zM181 222h1v1h-1zM181 202h1v1h-1zM181 183h1v1h-1zM181 163h1v1h-1zM201 713h1v1h-1zM201 693h1v1h-1zM201 674h1v1h-1zM201 654h1v1h-1zM201 634h1v1h-1zM201 615h1v1h-1zM201 595h1v1h-1zM201 575h1v1h-1zM201 556h1v1h-1zM201 536h1v1h-1zM201 517h1v1h-1zM201 497h1v1h-1zM201 477h1v1h-1zM201 458h1v1h-1zM201 438h1v1h-1zM201 418h1v1h-1zM201 399h1v1h-1zM201 379h1v1h-1zM201 359h1v1h-1zM201 340h1v1h-1zM201 320h1v1h-1zM201 300h1v1h-1zM201 281h1v1h-1zM201 261h1v1h-1zM201 242h1v1h-1zM201 222h1v1h-1zM201 202h1v1h-1zM201 183h1v1h-1zM201 163h1v1h-1zM220 713h1v1h-1zM220 693h1v1h-1zM220 674h1v1h-1zM220 654h1v1h-1zM220 634h1v1h-1zM220 615h1v1h-1zM220 595h1v1h-1zM220 575h1v1h-1zM220 556h1v1h-1zM220 536h1v1h-1zM220 517h1v1h-1zM220 497h1v1h-1zM220 477h1v1h-1zM220 458h1v1h-1zM220 438h1v1h-1zM220 418h1v1h-1zM220 399h1v1h-1zM220 379h1v1h-1zM220 359h1v1h-1zM220 340h1v1h-1zM220 320h1v1h-1zM220 300h1v1h-1zM220 281h1v1h-1zM220 261h1v1h-1zM220 242h1v1h-1zM220 222h1v1h-1zM220 202h1v1h-1zM220 183h1v1h-1zM220 163h1v1h-1zM240 713h1v1h-1zM240 693h1v1h-1zM240 674h1v1h-1zM240 654h1v1h-1zM240 634h1v1h-1zM240 615h1v1h-1zM240 595h1v1h-1zM240 575h1v1h-1zM240 556h1v1h-1zM240 536h1v1h-1zM240 517h1v1h-1zM240 497h1v1h-1zM240 477h1v1h-1zM240 458h1v1h-1zM240 438h1v1h-1zM240 418h1v1h-1zM240 399h1v1h-1zM240 379h1v1h-1zM240 359h1v1h-1zM240 340h1v1h-1zM240 320h1v1h-1zM240 300h1v1h-1zM240 281h1v1h-1zM240 261h1v1h-1zM240 242h1v1h-1zM240 222h1v1h-1zM240 202h1v1h-1zM240 183h1v1h-1zM240 163h1v1h-1zM260 713h1v1h-1zM260 693h1v1h-1zM260 674h1v1h-1zM260 654h1v1h-1zM260 634h1v1h-1zM260 615h1v1h-1zM260 595h1v1h-1zM260 575h1v1h-1zM260 556h1v1h-1zM260 536h1v1h-1zM260 517h1v1h-1zM260 497h1v1h-1zM260 477h1v1h-1zM260 458h1v1h-1zM260 438h1v1h-1zM260 418h1v1h-1zM260 399h1v1h-1zM260 379h1v1h-1zM260 359h1v1h-1zM260 340h1v1h-1zM260 320h1v1h-1zM260 300h1v1h-1zM260 281h1v1h-1zM260 261h1v1h-1zM260 242h1v1h-1zM260 222h1v1h-1zM260 202h1v1h-1zM260 183h1v1h-1zM260 163h1v1h-1zM279 713h1v1h-1zM279 693h1v1h-1zM279 674h1v1h-1zM279 654h1v1h-1zM279 634h1v1h-1zM279 615h1v1h-1zM279 595h1v1h-1zM279 575h1v1h-1zM279 556h1v1h-1zM279 536h1v1h-1zM279 517h1v1h-1zM279 497h1v1h-1zM279 477h1v1h-1zM279 458h1v1h-1zM279 438h1v1h-1zM279 418h1v1h-1zM279 399h1v1h-1zM279 379h1v1h-1zM279 359h1v1h-1zM279 340h1v1h-1zM279 320h1v1h-1zM279 300h1v1h-1zM279 281h1v1h-1zM279 261h1v1h-1zM279 242h1v1h-1zM279 222h1v1h-1zM279 202h1v1h-1zM279 183h1v1h-1zM279 163h1v1h-1zM299 713h1v1h-1zM299 693h1v1h-1zM299 674h1v1h-1zM299 654h1v1h-1zM299 634h1v1h-1zM299 615h1v1h-1zM299 595h1v1h-1zM299 575h1v1h-1zM299 556h1v1h-1zM299 536h1v1h-1zM299 517h1v1h-1zM299 497h1v1h-1zM299 477h1v1h-1zM299 458h1v1h-1zM299 438h1v1h-1zM299 418h1v1h-1zM299 399h1v1h-1zM299 379h1v1h-1zM299 359h1v1h-1zM299 340h1v1h-1zM299 320h1v1h-1zM299 300h1v1h-1zM299 281h1v1h-1zM299 261h1v1h-1zM299 242h1v1h-1zM299 222h1v1h-1zM299 202h1v1h-1zM299 183h1v1h-1zM299 163h1v1h-1zM319 713h1v1h-1zM319 693h1v1h-1zM319 674h1v1h-1zM319 654h1v1h-1zM319 634h1v1h-1zM319 615h1v1h-1zM319 595h1v1h-1zM319 575h1v1h-1zM319 556h1v1h-1zM319 536h1v1h-1zM319 517h1v1h-1zM319 497h1v1h-1zM319 477h1v1h-1zM319 458h1v1h-1zM319 438h1v1h-1zM319 418h1v1h-1zM319 399h1v1h-1zM319 379h1v1h-1zM319 359h1v1h-1zM319 340h1v1h-1zM319 320h1v1h-1zM319 300h1v1h-1zM319 281h1v1h-1zM319 261h1v1h-1zM319 242h1v1h-1zM319 222h1v1h-1zM319 202h1v1h-1zM319 183h1v1h-1zM319 163h1v1h-1zM338 713h1v1h-1zM338 693h1v1h-1zM338 674h1v1h-1zM338 654h1v1h-1zM338 634h1v1h-1zM338 615h1v1h-1zM338 595h1v1h-1zM338 575h1v1h-1zM338 556h1v1h-1zM338 536h1v1h-1zM338 517h1v1h-1zM338 497h1v1h-1zM338 477h1v1h-1zM338 458h1v1h-1zM338 438h1v1h-1zM338 418h1v1h-1zM338 399h1v1h-1zM338 379h1v1h-1zM338 359h1v1h-1zM338 340h1v1h-1zM338 320h1v1h-1zM338 300h1v1h-1zM338 281h1v1h-1zM338 261h1v1h-1zM338 242h1v1h-1zM338 222h1v1h-1zM338 202h1v1h-1zM338 183h1v1h-1zM338 163h1v1h-1zM358 713h1v1h-1zM358 693h1v1h-1zM358 674h1v1h-1zM358 654h1v1h-1zM358 634h1v1h-1zM358 615h1v1h-1zM358 595h1v1h-1zM358 575h1v1h-1zM358 556h1v1h-1zM358 536h1v1h-1zM358 517h1v1h-1zM358 497h1v1h-1zM358 477h1v1h-1zM358 458h1v1h-1zM358 438h1v1h-1zM358 418h1v1h-1zM358 399h1v1h-1zM358 379h1v1h-1zM358 359h1v1h-1zM358 340h1v1h-1zM358 320h1v1h-1zM358 300h1v1h-1zM358 281h1v1h-1zM358 261h1v1h-1zM358 242h1v1h-1zM358 222h1v1h-1zM358 202h1v1h-1zM358 183h1v1h-1zM358 163h1v1h-1zM378 713h1v1h-1zM378 693h1v1h-1zM378 674h1v1h-1zM378 654h1v1h-1zM378 634h1v1h-1zM378 615h1v1h-1zM378 595h1v1h-1zM378 575h1v1h-1zM378 556h1v1h-1zM378 536h1v1h-1zM378 517h1v1h-1zM378 497h1v1h-1zM378 477h1v1h-1zM378 458h1v1h-1zM378 438h1v1h-1zM378 418h1v1h-1zM378 399h1v1h-1zM378 379h1v1h-1zM378 359h1v1h-1zM378 340h1v1h-1zM378 320h1v1h-1zM378 300h1v1h-1zM378 281h1v1h-1zM378 261h1v1h-1zM378 242h1v1h-1zM378 222h1v1h-1zM378 202h1v1h-1zM378 183h1v1h-1zM378 163h1v1h-1zM397 713h1v1h-1zM397 693h1v1h-1zM397 674h1v1h-1zM397 654h1v1h-1zM397 634h1v1h-1zM397 615h1v1h-1zM397 595h1v1h-1zM397 575h1v1h-1zM397 556h1v1h-1zM397 536h1v1h-1zM397 517h1v1h-1zM397 497h1v1h-1zM397 477h1v1h-1zM397 458h1v1h-1zM397 438h1v1h-1zM397 418h1v1h-1zM397 399h1v1h-1zM397 379h1v1h-1zM397 359h1v1h-1zM397 340h1v1h-1zM397 320h1v1h-1zM397 300h1v1h-1zM397 281h1v1h-1zM397 261h1v1h-1zM397 242h1v1h-1zM397 222h1v1h-1zM397 202h1v1h-1zM397 183h1v1h-1zM397 163h1v1h-1zM417 713h1v1h-1zM417 693h1v1h-1zM417 674h1v1h-1zM417 654h1v1h-1zM417 634h1v1h-1zM417 615h1v1h-1zM417 595h1v1h-1zM417 575h1v1h-1zM417 556h1v1h-1zM417 536h1v1h-1zM417 517h1v1h-1zM417 497h1v1h-1zM417 477h1v1h-1zM417 458h1v1h-1zM417 438h1v1h-1zM417 418h1v1h-1zM417 399h1v1h-1zM417 379h1v1h-1zM417 359h1v1h-1zM417 340h1v1h-1zM417 320h1v1h-1zM417 300h1v1h-1zM417 281h1v1h-1zM417 261h1v1h-1zM417 242h1v1h-1zM417 222h1v1h-1zM417 202h1v1h-1zM417 183h1v1h-1zM417 163h1v1h-1zM436 713h1v1h-1zM436 693h1v1h-1zM436 674h1v1h-1zM436 654h1v1h-1zM436 634h1v1h-1zM436 615h1v1h-1zM436 595h1v1h-1zM436 575h1v1h-1zM436 556h1v1h-1zM436 536h1v1h-1zM436 517h1v1h-1zM436 497h1v1h-1zM436 477h1v1h-1zM436 458h1v1h-1zM436 438h1v1h-1zM436 418h1v1h-1zM436 399h1v1h-1zM436 379h1v1h-1zM436 359h1v1h-1zM436 340h1v1h-1zM436 320h1v1h-1zM436 300h1v1h-1zM436 281h1v1h-1zM436 261h1v1h-1zM436 242h1v1h-1zM436 222h1v1h-1zM436 202h1v1h-1zM436 183h1v1h-1zM436 163h1v1h-1zM456 713h1v1h-1zM456 693h1v1h-1zM456 674h1v1h-1zM456 654h1v1h-1zM456 634h1v1h-1zM456 615h1v1h-1zM456 595h1v1h-1zM456 575h1v1h-1zM456 556h1v1h-1zM456 536h1v1h-1zM456 517h1v1h-1zM456 497h1v1h-1zM456 477h1v1h-1zM456 458h1v1h-1zM456 438h1v1h-1zM456 418h1v1h-1zM456 399h1v1h-1zM456 379h1v1h-1zM456 359h1v1h-1zM456 340h1v1h-1zM456 320h1v1h-1zM456 300h1v1h-1zM456 281h1v1h-1zM456 261h1v1h-1zM456 242h1v1h-1zM456 222h1v1h-1zM456 202h1v1h-1zM456 183h1v1h-1zM456 163h1v1h-1zM476 713h1v1h-1zM476 693h1v1h-1zM476 674h1v1h-1zM476 654h1v1h-1zM476 634h1v1h-1zM476 615h1v1h-1zM476 595h1v1h-1zM476 575h1v1h-1zM476 556h1v1h-1zM476 536h1v1h-1zM476 517h1v1h-1zM476 497h1v1h-1zM476 477h1v1h-1zM476 458h1v1h-1zM476 438h1v1h-1zM476 418h1v1h-1zM476 399h1v1h-1zM476 379h1v1h-1zM476 359h1v1h-1zM476 340h1v1h-1zM476 320h1v1h-1zM476 300h1v1h-1zM476 281h1v1h-1zM476 261h1v1h-1zM476 242h1v1h-1zM476 222h1v1h-1zM476 202h1v1h-1zM476 183h1v1h-1zM476 163h1v1h-1zM495 713h1v1h-1zM495 693h1v1h-1zM495 674h1v1h-1zM495 654h1v1h-1zM495 634h1v1h-1zM495 615h1v1h-1zM495 595h1v1h-1zM495 575h1v1h-1zM495 556h1v1h-1zM495 536h1v1h-1zM495 517h1v1h-1zM495 497h1v1h-1zM495 477h1v1h-1zM495 458h1v1h-1zM495 438h1v1h-1zM495 418h1v1h-1zM495 399h1v1h-1zM495 379h1v1h-1zM495 359h1v1h-1zM495 340h1v1h-1zM495 320h1v1h-1zM495 300h1v1h-1zM495 281h1v1h-1zM495 261h1v1h-1zM495 242h1v1h-1zM495 222h1v1h-1zM495 202h1v1h-1zM495 183h1v1h-1zM495 163h1v1h-1zM515 713h1v1h-1zM515 693h1v1h-1zM515 674h1v1h-1zM515 654h1v1h-1zM515 634h1v1h-1zM515 615h1v1h-1zM515 595h1v1h-1zM515 575h1v1h-1zM515 556h1v1h-1zM515 536h1v1h-1zM515 517h1v1h-1zM515 497h1v1h-1zM515 477h1v1h-1zM515 458h1v1h-1zM515 438h1v1h-1zM515 418h1v1h-1zM515 399h1v1h-1zM515 379h1v1h-1zM515 359h1v1h-1zM515 340h1v1h-1zM515 320h1v1h-1zM515 300h1v1h-1zM515 281h1v1h-1zM515 261h1v1h-1zM515 242h1v1h-1zM515 222h1v1h-1zM515 202h1v1h-1zM515 183h1v1h-1zM515 163h1v1h-1zM535 713h1v1h-1zM535 693h1v1h-1zM535 674h1v1h-1zM535 654h1v1h-1zM535 634h1v1h-1zM535 615h1v1h-1zM535 595h1v1h-1zM535 575h1v1h-1zM535 556h1v1h-1zM535 536h1v1h-1zM535 517h1v1h-1zM535 497h1v1h-1zM535 477h1v1h-1zM535 458h1v1h-1zM535 438h1v1h-1zM535 418h1v1h-1zM535 399h1v1h-1zM535 379h1v1h-1zM535 359h1v1h-1zM535 340h1v1h-1zM535 320h1v1h-1zM535 300h1v1h-1zM535 281h1v1h-1zM535 261h1v1h-1zM535 242h1v1h-1zM535 222h1v1h-1zM535 202h1v1h-1zM535 183h1v1h-1zM535 163h1v1h-1zM554 713h1v1h-1zM554 693h1v1h-1zM554 674h1v1h-1zM554 654h1v1h-1zM554 634h1v1h-1zM554 615h1v1h-1zM554 595h1v1h-1zM554 575h1v1h-1zM554 556h1v1h-1zM554 536h1v1h-1zM554 517h1v1h-1zM554 497h1v1h-1zM554 477h1v1h-1zM554 458h1v1h-1zM554 438h1v1h-1zM554 418h1v1h-1zM554 399h1v1h-1zM554 379h1v1h-1zM554 359h1v1h-1zM554 340h1v1h-1zM554 320h1v1h-1zM554 300h1v1h-1zM554 281h1v1h-1zM554 261h1v1h-1zM554 242h1v1h-1zM554 222h1v1h-1zM554 202h1v1h-1zM554 183h1v1h-1zM554 163h1v1h-1zM574 713h1v1h-1zM574 693h1v1h-1zM574 674h1v1h-1zM574 654h1v1h-1zM574 634h1v1h-1zM574 615h1v1h-1zM574 595h1v1h-1zM574 575h1v1h-1zM574 556h1v1h-1zM574 536h1v1h-1zM574 517h1v1h-1zM574 497h1v1h-1zM574 477h1v1h-1zM574 458h1v1h-1zM574 438h1v1h-1zM574 418h1v1h-1zM574 399h1v1h-1zM574 379h1v1h-1zM574 359h1v1h-1zM574 340h1v1h-1zM574 320h1v1h-1zM574 300h1v1h-1zM574 281h1v1h-1zM574 261h1v1h-1zM574 242h1v1h-1zM574 222h1v1h-1zM574 202h1v1h-1zM574 183h1v1h-1zM574 163h1v1h-1zM594 713h1v1h-1zM594 693h1v1h-1zM594 674h1v1h-1zM594 654h1v1h-1zM594 634h1v1h-1zM594 615h1v1h-1zM594 595h1v1h-1zM594 575h1v1h-1zM594 556h1v1h-1zM594 536h1v1h-1zM594 517h1v1h-1zM594 497h1v1h-1zM594 477h1v1h-1zM594 458h1v1h-1zM594 438h1v1h-1zM594 418h1v1h-1zM594 399h1v1h-1zM594 379h1v1h-1zM594 359h1v1h-1zM594 340h1v1h-1zM594 320h1v1h-1zM594 300h1v1h-1zM594 281h1v1h-1zM594 261h1v1h-1zM594 242h1v1h-1zM594 222h1v1h-1zM594 202h1v1h-1zM594 183h1v1h-1zM594 163h1v1h-1zM613 713h1v1h-1zM613 693h1v1h-1zM613 674h1v1h-1zM613 654h1v1h-1zM613 634h1v1h-1zM613 615h1v1h-1zM613 595h1v1h-1zM613 575h1v1h-1zM613 556h1v1h-1zM613 536h1v1h-1zM613 517h1v1h-1zM613 497h1v1h-1zM613 477h1v1h-1zM613 458h1v1h-1zM613 438h1v1h-1zM613 418h1v1h-1zM613 399h1v1h-1zM613 379h1v1h-1zM613 359h1v1h-1zM613 340h1v1h-1zM613 320h1v1h-1zM613 300h1v1h-1zM613 281h1v1h-1zM613 261h1v1h-1zM613 242h1v1h-1zM613 222h1v1h-1zM613 202h1v1h-1zM613 183h1v1h-1zM613 163h1v1h-1zM633 713h1v1h-1zM633 693h1v1h-1zM633 674h1v1h-1zM633 654h1v1h-1zM633 634h1v1h-1zM633 615h1v1h-1zM633 595h1v1h-1zM633 575h1v1h-1zM633 556h1v1h-1zM633 536h1v1h-1zM633 517h1v1h-1zM633 497h1v1h-1zM633 477h1v1h-1zM633 458h1v1h-1zM633 438h1v1h-1zM633 418h1v1h-1zM633 399h1v1h-1zM633 379h1v1h-1zM633 359h1v1h-1zM633 340h1v1h-1zM633 320h1v1h-1zM633 300h1v1h-1zM633 281h1v1h-1zM633 261h1v1h-1zM633 242h1v1h-1zM633 222h1v1h-1zM633 202h1v1h-1zM633 183h1v1h-1zM633 163h1v1h-1zM653 713h1v1h-1zM653 693h1v1h-1zM653 674h1v1h-1zM653 654h1v1h-1zM653 634h1v1h-1zM653 615h1v1h-1zM653 595h1v1h-1zM653 575h1v1h-1zM653 556h1v1h-1zM653 536h1v1h-1zM653 517h1v1h-1zM653 497h1v1h-1zM653 477h1v1h-1zM653 458h1v1h-1zM653 438h1v1h-1zM653 418h1v1h-1zM653 399h1v1h-1zM653 379h1v1h-1zM653 359h1v1h-1zM653 340h1v1h-1zM653 320h1v1h-1zM653 300h1v1h-1zM653 281h1v1h-1zM653 261h1v1h-1zM653 242h1v1h-1zM653 222h1v1h-1zM653 202h1v1h-1zM653 183h1v1h-1zM653 163h1v1h-1zM672 713h1v1h-1zM672 693h1v1h-1zM672 674h1v1h-1zM672 654h1v1h-1zM672 634h1v1h-1zM672 615h1v1h-1zM672 595h1v1h-1zM672 575h1v1h-1zM672 556h1v1h-1zM672 536h1v1h-1zM672 517h1v1h-1zM672 497h1v1h-1zM672 477h1v1h-1zM672 458h1v1h-1zM672 438h1v1h-1zM672 418h1v1h-1zM672 399h1v1h-1zM672 379h1v1h-1zM672 359h1v1h-1zM672 340h1v1h-1zM672 320h1v1h-1zM672 300h1v1h-1zM672 281h1v1h-1zM672 261h1v1h-1zM672 242h1v1h-1zM672 222h1v1h-1zM672 202h1v1h-1zM672 183h1v1h-1zM672 163h1v1h-1zM692 713h1v1h-1zM692 693h1v1h-1zM692 674h1v1h-1zM692 654h1v1h-1zM692 634h1v1h-1zM692 615h1v1h-1zM692 595h1v1h-1zM692 575h1v1h-1zM692 556h1v1h-1zM692 536h1v1h-1zM692 517h1v1h-1zM692 497h1v1h-1zM692 477h1v1h-1zM692 458h1v1h-1zM692 438h1v1h-1zM692 418h1v1h-1zM692 399h1v1h-1zM692 379h1v1h-1zM692 359h1v1h-1zM692 340h1v1h-1zM692 320h1v1h-1zM692 300h1v1h-1zM692 281h1v1h-1zM692 261h1v1h-1zM692 242h1v1h-1zM692 222h1v1h-1zM692 202h1v1h-1zM692 183h1v1h-1zM692 163h1v1h-1zM711 713h1v1h-1zM711 693h1v1h-1zM711 674h1v1h-1zM711 654h1v1h-1zM711 634h1v1h-1zM711 615h1v1h-1zM711 595h1v1h-1zM711 575h1v1h-1zM711 556h1v1h-1zM711 536h1v1h-1zM711 517h1v1h-1zM711 497h1v1h-1zM711 477h1v1h-1zM711 458h1v1h-1zM711 438h1v1h-1zM711 418h1v1h-1zM711 399h1v1h-1zM711 379h1v1h-1zM711 359h1v1h-1zM711 340h1v1h-1zM711 320h1v1h-1zM711 300h1v1h-1zM711 281h1v1h-1zM711 261h1v1h-1zM711 242h1v1h-1zM711 222h1v1h-1zM711 202h1v1h-1zM711 183h1v1h-1zM711 163h1v1h-1zM731 713h1v1h-1zM731 693h1v1h-1zM731 674h1v1h-1zM731 654h1v1h-1zM731 634h1v1h-1zM731 615h1v1h-1zM731 595h1v1h-1zM731 575h1v1h-1zM731 556h1v1h-1zM731 536h1v1h-1zM731 517h1v1h-1zM731 497h1v1h-1zM731 477h1v1h-1zM731 458h1v1h-1zM731 438h1v1h-1zM731 418h1v1h-1zM731 399h1v1h-1zM731 379h1v1h-1zM731 359h1v1h-1zM731 340h1v1h-1zM731 320h1v1h-1zM731 300h1v1h-1zM731 281h1v1h-1zM731 261h1v1h-1zM731 242h1v1h-1zM731 222h1v1h-1zM731 202h1v1h-1zM731 183h1v1h-1zM731 163h1v1h-1zM751 713h1v1h-1zM751 693h1v1h-1zM751 674h1v1h-1zM751 654h1v1h-1zM751 634h1v1h-1zM751 615h1v1h-1zM751 595h1v1h-1zM751 575h1v1h-1zM751 556h1v1h-1zM751 536h1v1h-1zM751 517h1v1h-1zM751 497h1v1h-1zM751 477h1v1h-1zM751 458h1v1h-1zM751 438h1v1h-1zM751 418h1v1h-1zM751 399h1v1h-1zM751 379h1v1h-1zM751 359h1v1h-1zM751 340h1v1h-1zM751 320h1v1h-1zM751 300h1v1h-1zM751 281h1v1h-1zM751 261h1v1h-1zM751 242h1v1h-1zM751 222h1v1h-1zM751 202h1v1h-1zM751 183h1v1h-1zM751 163h1v1h-1zM770 713h1v1h-1zM770 693h1v1h-1zM770 674h1v1h-1zM770 654h1v1h-1zM770 634h1v1h-1zM770 615h1v1h-1zM770 595h1v1h-1zM770 575h1v1h-1zM770 556h1v1h-1zM770 536h1v1h-1zM770 517h1v1h-1zM770 497h1v1h-1zM770 477h1v1h-1zM770 458h1v1h-1zM770 438h1v1h-1zM770 418h1v1h-1zM770 399h1v1h-1zM770 379h1v1h-1zM770 359h1v1h-1zM770 340h1v1h-1zM770 320h1v1h-1zM770 300h1v1h-1zM770 281h1v1h-1zM770 261h1v1h-1zM770 242h1v1h-1zM770 222h1v1h-1zM770 202h1v1h-1zM770 183h1v1h-1zM770 163h1v1h-1zM790 713h1v1h-1zM790 693h1v1h-1zM790 674h1v1h-1zM790 654h1v1h-1zM790 634h1v1h-1zM790 615h1v1h-1zM790 595h1v1h-1zM790 575h1v1h-1zM790 556h1v1h-1zM790 536h1v1h-1zM790 517h1v1h-1zM790 497h1v1h-1zM790 477h1v1h-1zM790 458h1v1h-1zM790 438h1v1h-1zM790 418h1v1h-1zM790 399h1v1h-1zM790 379h1v1h-1zM790 359h1v1h-1zM790 340h1v1h-1zM790 320h1v1h-1zM790 300h1v1h-1zM790 281h1v1h-1zM790 261h1v1h-1zM790 242h1v1h-1zM790 222h1v1h-1zM790 202h1v1h-1zM790 183h1v1h-1zM790 163h1v1h-1zM810 713h1v1h-1zM810 693h1v1h-1zM810 674h1v1h-1zM810 654h1v1h-1zM810 634h1v1h-1zM810 615h1v1h-1zM810 595h1v1h-1zM810 575h1v1h-1zM810 556h1v1h-1zM810 536h1v1h-1zM810 517h1v1h-1zM810 497h1v1h-1zM810 477h1v1h-1zM810 458h1v1h-1zM810 438h1v1h-1zM810 418h1v1h-1zM810 399h1v1h-1zM810 379h1v1h-1zM810 359h1v1h-1zM810 340h1v1h-1zM810 320h1v1h-1zM810 300h1v1h-1zM810 281h1v1h-1zM810 261h1v1h-1zM810 242h1v1h-1zM810 222h1v1h-1zM810 202h1v1h-1zM810 183h1v1h-1zM810 163h1v1h-1zM829 713h1v1h-1zM829 693h1v1h-1zM829 674h1v1h-1zM829 654h1v1h-1zM829 634h1v1h-1zM829 615h1v1h-1zM829 595h1v1h-1zM829 575h1v1h-1zM829 556h1v1h-1zM829 536h1v1h-1zM829 517h1v1h-1zM829 497h1v1h-1zM829 477h1v1h-1zM829 458h1v1h-1zM829 438h1v1h-1zM829 418h1v1h-1zM829 399h1v1h-1zM829 379h1v1h-1zM829 359h1v1h-1zM829 340h1v1h-1zM829 320h1v1h-1zM829 300h1v1h-1zM829 281h1v1h-1zM829 261h1v1h-1zM829 242h1v1h-1zM829 222h1v1h-1zM829 202h1v1h-1zM829 183h1v1h-1zM829 163h1v1h-1zM849 713h1v1h-1zM849 693h1v1h-1zM849 674h1v1h-1zM849 654h1v1h-1zM849 634h1v1h-1zM849 615h1v1h-1zM849 595h1v1h-1zM849 575h1v1h-1zM849 556h1v1h-1zM849 536h1v1h-1zM849 517h1v1h-1zM849 497h1v1h-1zM849 477h1v1h-1zM849 458h1v1h-1zM849 438h1v1h-1zM849 418h1v1h-1zM849 399h1v1h-1zM849 379h1v1h-1zM849 359h1v1h-1zM849 340h1v1h-1zM849 320h1v1h-1zM849 300h1v1h-1zM849 281h1v1h-1zM849 261h1v1h-1zM849 242h1v1h-1zM849 222h1v1h-1zM849 202h1v1h-1zM849 183h1v1h-1zM849 163h1v1h-1zM869 713h1v1h-1zM869 693h1v1h-1zM869 674h1v1h-1zM869 654h1v1h-1zM869 634h1v1h-1zM869 615h1v1h-1zM869 595h1v1h-1zM869 575h1v1h-1zM869 556h1v1h-1zM869 536h1v1h-1zM869 517h1v1h-1zM869 497h1v1h-1zM869 477h1v1h-1zM869 458h1v1h-1zM869 438h1v1h-1zM869 418h1v1h-1zM869 399h1v1h-1zM869 379h1v1h-1zM869 359h1v1h-1zM869 340h1v1h-1zM869 320h1v1h-1zM869 300h1v1h-1zM869 281h1v1h-1zM869 261h1v1h-1zM869 242h1v1h-1zM869 222h1v1h-1zM869 202h1v1h-1zM869 183h1v1h-1zM869 163h1v1h-1zM888 713h1v1h-1zM888 693h1v1h-1zM888 674h1v1h-1zM888 654h1v1h-1zM888 634h1v1h-1zM888 615h1v1h-1zM888 595h1v1h-1zM888 575h1v1h-1zM888 556h1v1h-1zM888 536h1v1h-1zM888 517h1v1h-1zM888 497h1v1h-1zM888 477h1v1h-1zM888 458h1v1h-1zM888 438h1v1h-1zM888 418h1v1h-1zM888 399h1v1h-1zM888 379h1v1h-1zM888 359h1v1h-1zM888 340h1v1h-1zM888 320h1v1h-1zM888 300h1v1h-1zM888 281h1v1h-1zM888 261h1v1h-1zM888 242h1v1h-1zM888 222h1v1h-1zM888 202h1v1h-1zM888 183h1v1h-1zM888 163h1v1h-1zM908 713h1v1h-1zM908 693h1v1h-1zM908 674h1v1h-1zM908 654h1v1h-1zM908 634h1v1h-1zM908 615h1v1h-1zM908 595h1v1h-1zM908 575h1v1h-1zM908 556h1v1h-1zM908 536h1v1h-1zM908 517h1v1h-1zM908 497h1v1h-1zM908 477h1v1h-1zM908 458h1v1h-1zM908 438h1v1h-1zM908 418h1v1h-1zM908 399h1v1h-1zM908 379h1v1h-1zM908 359h1v1h-1zM908 340h1v1h-1zM908 320h1v1h-1zM908 300h1v1h-1zM908 281h1v1h-1zM908 261h1v1h-1zM908 242h1v1h-1zM908 222h1v1h-1zM908 202h1v1h-1zM908 183h1v1h-1zM908 163h1v1h-1zM928 713h1v1h-1zM928 693h1v1h-1zM928 674h1v1h-1zM928 654h1v1h-1zM928 634h1v1h-1zM928 615h1v1h-1zM928 595h1v1h-1zM928 575h1v1h-1zM928 556h1v1h-1zM928 536h1v1h-1zM928 517h1v1h-1zM928 497h1v1h-1zM928 477h1v1h-1zM928 458h1v1h-1zM928 438h1v1h-1zM928 418h1v1h-1zM928 399h1v1h-1zM928 379h1v1h-1zM928 359h1v1h-1zM928 340h1v1h-1zM928 320h1v1h-1zM928 300h1v1h-1zM928 281h1v1h-1zM928 261h1v1h-1zM928 242h1v1h-1zM928 222h1v1h-1zM928 202h1v1h-1zM928 183h1v1h-1zM928 163h1v1h-1zM947 713h1v1h-1zM947 693h1v1h-1zM947 674h1v1h-1zM947 654h1v1h-1zM947 634h1v1h-1zM947 615h1v1h-1zM947 595h1v1h-1zM947 575h1v1h-1zM947 556h1v1h-1zM947 536h1v1h-1zM947 517h1v1h-1zM947 497h1v1h-1zM947 477h1v1h-1zM947 458h1v1h-1zM947 438h1v1h-1zM947 418h1v1h-1zM947 399h1v1h-1zM947 379h1v1h-1zM947 359h1v1h-1zM947 340h1v1h-1zM947 320h1v1h-1zM947 300h1v1h-1zM947 281h1v1h-1zM947 261h1v1h-1zM947 242h1v1h-1zM947 222h1v1h-1zM947 202h1v1h-1zM947 183h1v1h-1zM947 163h1v1h-1zM967 713h1v1h-1zM967 693h1v1h-1zM967 674h1v1h-1zM967 654h1v1h-1zM967 634h1v1h-1zM967 615h1v1h-1zM967 595h1v1h-1zM967 575h1v1h-1zM967 556h1v1h-1zM967 536h1v1h-1zM967 517h1v1h-1zM967 497h1v1h-1zM967 477h1v1h-1zM967 458h1v1h-1zM967 438h1v1h-1zM967 418h1v1h-1zM967 399h1v1h-1zM967 379h1v1h-1zM967 359h1v1h-1zM967 340h1v1h-1zM967 320h1v1h-1zM967 300h1v1h-1zM967 281h1v1h-1zM967 261h1v1h-1zM967 242h1v1h-1zM967 222h1v1h-1zM967 202h1v1h-1zM967 183h1v1h-1zM967 163h1v1h-1zM986 713h1v1h-1zM986 693h1v1h-1zM986 674h1v1h-1zM986 654h1v1h-1zM986 634h1v1h-1zM986 615h1v1h-1zM986 595h1v1h-1zM986 575h1v1h-1zM986 556h1v1h-1zM986 536h1v1h-1zM986 517h1v1h-1zM986 497h1v1h-1zM986 477h1v1h-1zM986 458h1v1h-1zM986 438h1v1h-1zM986 418h1v1h-1zM986 399h1v1h-1zM986 379h1v1h-1zM986 359h1v1h-1zM986 340h1v1h-1zM986 320h1v1h-1zM986 300h1v1h-1zM986 281h1v1h-1zM986 261h1v1h-1zM986 242h1v1h-1zM986 222h1v1h-1zM986 202h1v1h-1zM986 183h1v1h-1zM986 163h1v1h-1zM1006 713h1v1h-1zM1006 693h1v1h-1zM1006 674h1v1h-1zM1006 654h1v1h-1zM1006 634h1v1h-1zM1006 615h1v1h-1zM1006 595h1v1h-1zM1006 575h1v1h-1zM1006 556h1v1h-1zM1006 536h1v1h-1zM1006 517h1v1h-1zM1006 497h1v1h-1zM1006 477h1v1h-1zM1006 458h1v1h-1zM1006 438h1v1h-1zM1006 418h1v1h-1zM1006 399h1v1h-1zM1006 379h1v1h-1zM1006 359h1v1h-1zM1006 340h1v1h-1zM1006 320h1v1h-1zM1006 300h1v1h-1zM1006 281h1v1h-1zM1006 261h1v1h-1zM1006 242h1v1h-1zM1006 222h1v1h-1zM1006 202h1v1h-1zM1006 183h1v1h-1zM1006 163h1v1h-1zM1026 713h1v1h-1zM1026 693h1v1h-1zM1026 674h1v1h-1zM1026 654h1v1h-1zM1026 634h1v1h-1zM1026 615h1v1h-1zM1026 595h1v1h-1zM1026 575h1v1h-1zM1026 556h1v1h-1zM1026 536h1v1h-1zM1026 517h1v1h-1zM1026 497h1v1h-1zM1026 477h1v1h-1zM1026 458h1v1h-1zM1026 438h1v1h-1zM1026 418h1v1h-1zM1026 399h1v1h-1zM1026 379h1v1h-1zM1026 359h1v1h-1zM1026 340h1v1h-1zM1026 320h1v1h-1zM1026 300h1v1h-1zM1026 281h1v1h-1zM1026 261h1v1h-1zM1026 242h1v1h-1zM1026 222h1v1h-1zM1026 202h1v1h-1zM1026 183h1v1h-1zM1026 163h1v1h-1zM1045 713h1v1h-1zM1045 693h1v1h-1zM1045 674h1v1h-1zM1045 654h1v1h-1zM1045 634h1v1h-1zM1045 615h1v1h-1zM1045 595h1v1h-1zM1045 575h1v1h-1zM1045 556h1v1h-1zM1045 536h1v1h-1zM1045 517h1v1h-1zM1045 497h1v1h-1zM1045 477h1v1h-1zM1045 458h1v1h-1zM1045 438h1v1h-1zM1045 418h1v1h-1zM1045 399h1v1h-1zM1045 379h1v1h-1zM1045 359h1v1h-1zM1045 340h1v1h-1zM1045 320h1v1h-1zM1045 300h1v1h-1zM1045 281h1v1h-1zM1045 261h1v1h-1zM1045 242h1v1h-1zM1045 222h1v1h-1zM1045 202h1v1h-1zM1045 183h1v1h-1zM1045 163h1v1h-1zM1065 713h1v1h-1zM1065 693h1v1h-1zM1065 674h1v1h-1zM1065 654h1v1h-1zM1065 634h1v1h-1zM1065 615h1v1h-1zM1065 595h1v1h-1zM1065 575h1v1h-1zM1065 556h1v1h-1zM1065 536h1v1h-1zM1065 517h1v1h-1zM1065 497h1v1h-1zM1065 477h1v1h-1zM1065 458h1v1h-1zM1065 438h1v1h-1zM1065 418h1v1h-1zM1065 399h1v1h-1zM1065 379h1v1h-1zM1065 359h1v1h-1zM1065 340h1v1h-1zM1065 320h1v1h-1zM1065 300h1v1h-1zM1065 281h1v1h-1zM1065 261h1v1h-1zM1065 242h1v1h-1zM1065 222h1v1h-1zM1065 202h1v1h-1zM1065 183h1v1h-1zM1065 163h1v1h-1zM1085 713h1v1h-1zM1085 693h1v1h-1zM1085 674h1v1h-1zM1085 654h1v1h-1zM1085 634h1v1h-1zM1085 615h1v1h-1zM1085 595h1v1h-1zM1085 575h1v1h-1zM1085 556h1v1h-1zM1085 536h1v1h-1zM1085 517h1v1h-1zM1085 497h1v1h-1zM1085 477h1v1h-1zM1085 458h1v1h-1zM1085 438h1v1h-1zM1085 418h1v1h-1zM1085 399h1v1h-1zM1085 379h1v1h-1zM1085 359h1v1h-1zM1085 340h1v1h-1zM1085 320h1v1h-1zM1085 300h1v1h-1zM1085 281h1v1h-1zM1085 261h1v1h-1zM1085 242h1v1h-1zM1085 222h1v1h-1zM1085 202h1v1h-1zM1085 183h1v1h-1zM1085 163h1v1h-1zM1104 713h1v1h-1zM1104 693h1v1h-1zM1104 674h1v1h-1zM1104 654h1v1h-1zM1104 634h1v1h-1zM1104 615h1v1h-1zM1104 595h1v1h-1zM1104 575h1v1h-1zM1104 556h1v1h-1zM1104 536h1v1h-1zM1104 517h1v1h-1zM1104 497h1v1h-1zM1104 477h1v1h-1zM1104 458h1v1h-1zM1104 438h1v1h-1zM1104 418h1v1h-1zM1104 399h1v1h-1zM1104 379h1v1h-1zM1104 359h1v1h-1zM1104 340h1v1h-1zM1104 320h1v1h-1zM1104 300h1v1h-1zM1104 281h1v1h-1zM1104 261h1v1h-1zM1104 242h1v1h-1zM1104 222h1v1h-1zM1104 202h1v1h-1zM1104 183h1v1h-1zM1104 163h1v1h-1zM1124 713h1v1h-1zM1124 693h1v1h-1zM1124 674h1v1h-1zM1124 654h1v1h-1zM1124 634h1v1h-1zM1124 615h1v1h-1zM1124 595h1v1h-1zM1124 575h1v1h-1zM1124 556h1v1h-1zM1124 536h1v1h-1zM1124 517h1v1h-1zM1124 497h1v1h-1zM1124 477h1v1h-1zM1124 458h1v1h-1zM1124 438h1v1h-1zM1124 418h1v1h-1zM1124 399h1v1h-1zM1124 379h1v1h-1zM1124 359h1v1h-1zM1124 340h1v1h-1zM1124 320h1v1h-1zM1124 300h1v1h-1zM1124 281h1v1h-1zM1124 261h1v1h-1zM1124 242h1v1h-1zM1124 222h1v1h-1zM1124 202h1v1h-1zM1124 183h1v1h-1zM1124 163h1v1h-1z" fill="#3c3c3c"/><path d="M211.14000000000001 575.96 V251.9 L240.60000000000002 222.44 H515.5600000000001 L545.02 251.9 V575.96" stroke="#fff" stroke-width="4.6" fill="none" stroke-linejoin="miter"/><path d="M211.14000000000001 251.9 H545.02" stroke="#fff" stroke-width="4.6" fill="none" stroke-linejoin="miter"/><path d="M142.4 605.4200000000001 L171.86 575.96 H1094.94 L1124.4 605.4200000000001 V693.8 H142.4 Z" stroke="#fff" stroke-width="4.6" fill="none" stroke-linejoin="miter"/><path d="M142.4 605.4200000000001 H1124.4" stroke="#fff" stroke-width="4.6" fill="none" stroke-linejoin="miter"/><path d="M888.72 693.8 V605.4200000000001 L877.5 575.96" stroke="#fff" stroke-width="4.6" fill="none" stroke-linejoin="miter"/><path d="M299.52 222.44 V693.8" stroke="#fff" stroke-width="2.9" stroke-dasharray="31.6 17" stroke-dashoffset="22.65" stroke-linecap="round"/><path d="M456.64 222.44 V693.8" stroke="#fff" stroke-width="2.9" stroke-dasharray="31.6 17" stroke-dashoffset="22.65" stroke-linecap="round"/><path d="M378.08000000000004 163.3 V760" stroke="#ff0000" stroke-width="2.6" stroke-dasharray="80.4 16.9 15.4 17.1" stroke-dashoffset="4.7" stroke-linecap="round"/><line x1="211.14000000000001" y1="150" x2="211.14000000000001" y2="242.4" stroke="#008cff" stroke-width="3.6" stroke-linecap="round"/><line x1="299.52" y1="150" x2="299.52" y2="213.6" stroke="#008cff" stroke-width="3.6" stroke-linecap="round"/><line x1="456.64" y1="150" x2="456.64" y2="213.6" stroke="#008cff" stroke-width="3.6" stroke-linecap="round"/><line x1="545.02" y1="150" x2="545.02" y2="242.4" stroke="#008cff" stroke-width="3.6" stroke-linecap="round"/><line x1="90" y1="222.44" x2="232" y2="222.44" stroke="#008cff" stroke-width="3.6" stroke-linecap="round"/><line x1="90" y1="693.8" x2="133.8" y2="693.8" stroke="#008cff" stroke-width="3.6" stroke-linecap="round"/><line x1="1105" y1="575.96" x2="1145" y2="575.96" stroke="#008cff" stroke-width="3.6" stroke-linecap="round"/><line x1="1134" y1="693.8" x2="1145" y2="693.8" stroke="#008cff" stroke-width="3.6" stroke-linecap="round"/><line x1="142.4" y1="703.5" x2="142.4" y2="740" stroke="#008cff" stroke-width="3.6" stroke-linecap="round"/><line x1="888.72" y1="703.5" x2="888.72" y2="740" stroke="#008cff" stroke-width="3.6" stroke-linecap="round"/><line x1="1124.4" y1="703.5" x2="1124.4" y2="740" stroke="#008cff" stroke-width="3.6" stroke-linecap="round"/></svg><div class="a" style="left:72px;top:748px;width:1083px;height:2px;background:#c4c4c4"></div><div class="a" style="left:72.5px;top:750px;width:1081px;height:20.5px;background:#fff"></div><div class="a" style="left:77.3px;top:749.3px;font-size:13.2px;font-style:italic;color:#1c1cd8">Comando:<span style="font-style:normal"> zoomin</span></div><div class="a" style="left:1143.9px;top:748px;width:7.2px;height:19.7px;background:#808080;border-radius:0 0 4px 4px"></div><div class="a" style="left:72px;top:770.3px;width:1083px;height:1.2px;background:#c8c8c8"></div><div class="a" style="left:72px;top:771.5px;width:1082px;height:26.5px;background:#ececec"></div><div class="a" style="left:73.3px;top:777.5px;font-size:13px;color:#111">Comando:</div><div class="a" style="left:138px;top:776px;width:989px;height:18.2px;background:#fff"></div><div class="a" style="left:1127.5px;top:772.3px;width:25.5px;height:25.5px;border:1px solid #b8b8b8;background:linear-gradient(#f6f6f6,#e6e6e6)"></div><svg style="left:1133px;top:780px" width="15" height="11"><rect x="0.6" y="0.6" width="13" height="9.5" fill="#eee" stroke="#333" stroke-width="1"/><rect x="0" y="0" width="14.2" height="2.8" fill="#111"/><rect x="10.8" y="1" width="1" height="1" fill="#fff"/></svg><div class="a" style="left:1155px;top:108px;width:300px;height:690px;background:#fff"></div><div class="a" style="left:1155px;top:108px;width:300px;height:22px;background:linear-gradient(#ececec,#dcdcdc)"></div><svg style="left:1155px;top:109px" width="40" height="18"><circle cx="8.9" cy="9" r="6.9" fill="#6e6e6e"/><path d="M6.2 6.3 L11.6 11.7 M11.6 6.3 L6.2 11.7" stroke="#fff" stroke-width="1.8"/><circle cx="27" cy="9" r="6.9" fill="#6e6e6e"/><rect x="25.2" y="5.3" width="5.5" height="4.3" fill="none" stroke="#fff" stroke-width="1.1"/><rect x="23" y="7.8" width="5.5" height="4.3" fill="#6e6e6e" stroke="#fff" stroke-width="1.1"/></svg><div class="a" style="left:1280.4px;top:112px;font-size:12px;color:#262626">Elenco dei livelli</div><div class="a" style="left:1155.0px;top:130.5px;width:61px;height:25.5px;border:1px solid #a4a4a4;background:linear-gradient(#f6f6f6,#e6e6e6)"></div><div class="a" style="left:1214.9px;top:130.5px;width:61px;height:25.5px;border:1px solid #a4a4a4;background:linear-gradient(#f6f6f6,#e6e6e6)"></div><div class="a" style="left:1274.8px;top:130.5px;width:61px;height:25.5px;border:1px solid #a4a4a4;background:linear-gradient(#f6f6f6,#e6e6e6)"></div><div class="a" style="left:1334.7px;top:130.5px;width:61px;height:25.5px;border:1px solid #a4a4a4;background:linear-gradient(#f6f6f6,#e6e6e6)"></div><div class="a" style="left:1394.6px;top:130.5px;width:61px;height:25.5px;border:1px solid #a4a4a4;background:linear-gradient(#f6f6f6,#e6e6e6)"></div><svg style="left:0;top:0" width="1" height="1"><g transform="translate(1185,142.5)"><path d="M-7 0 Q0 -7.5 7 0 Q0 7.5 -7 0 Z" fill="#000"/><ellipse cx="0" cy="0" rx="4.8" ry="3.4" fill="#fff"/><circle cx="0" cy="0.3" r="3" fill="#000"/><circle cx="-0.8" cy="-0.9" r="0.8" fill="#fff"/><path d="M-7.3 -0.6 Q0 -8 7.3 -0.6" fill="none" stroke="#000" stroke-width="1.6"/></g><g transform="translate(1245,142.5)"><path d="M-7 0 Q0 -7.5 7 0 Q0 7.5 -7 0 Z" fill="#999"/><ellipse cx="0" cy="0" rx="4.8" ry="3.4" fill="#fff"/><circle cx="0" cy="0.3" r="3" fill="#999"/><circle cx="-0.8" cy="-0.9" r="0.8" fill="#fff"/><path d="M-7.3 -0.6 Q0 -8 7.3 -0.6" fill="none" stroke="#999" stroke-width="1.6"/></g><path d="M1305 137 v11 M1299.5 142.5 h11" stroke="#e80000" stroke-width="3"/><path d="M1359.5 142.5 h11" stroke="#e80000" stroke-width="3"/><g transform="translate(1418,135.5)"><path d="M0 14 L2 9 L11.5 0.5 L14 3 L4.5 12 Z" fill="#e8a93a" stroke="#8a5a10" stroke-width="0.7"/><path d="M11.5 0.5 L14 3 L15 2 L12.5 -0.5 Z" fill="#e03030"/><path d="M0 14 L1 11.5 L2.5 13 Z" fill="#333"/></g><rect x="1161.5" y="163" width="15" height="8.5" fill="#fff" stroke="#000" stroke-width="1.2"/><g transform="translate(1422.7,167)"><path d="M-7 0 Q0 -7.5 7 0 Q0 7.5 -7 0 Z" fill="#000"/><ellipse cx="0" cy="0" rx="4.8" ry="3.4" fill="#fff"/><circle cx="0" cy="0.3" r="3" fill="#000"/><circle cx="-0.8" cy="-0.9" r="0.8" fill="#fff"/><path d="M-7.3 -0.6 Q0 -8 7.3 -0.6" fill="none" stroke="#000" stroke-width="1.6"/></g><g transform="translate(1444.8,167)"><path d="M-3.2 -1 V-3.5 A3.2 3.2 0 0 1 3.2 -3.5 V-1" fill="none" stroke="#c4c4c4" stroke-width="1.5"/><rect x="-4.7" y="-1.5" width="9.4" height="7.5" rx="0.8" fill="#c4c4c4"/></g><rect x="1161.5" y="183" width="15" height="8.5" fill="#ff0000" stroke="#000" stroke-width="1.2"/><g transform="translate(1422.7,187)"><path d="M-7 0 Q0 -7.5 7 0 Q0 7.5 -7 0 Z" fill="#000"/><ellipse cx="0" cy="0" rx="4.8" ry="3.4" fill="#fff"/><circle cx="0" cy="0.3" r="3" fill="#000"/><circle cx="-0.8" cy="-0.9" r="0.8" fill="#fff"/><path d="M-7.3 -0.6 Q0 -8 7.3 -0.6" fill="none" stroke="#000" stroke-width="1.6"/></g><g transform="translate(1444.8,187)"><path d="M-3.2 -1 V-3.5 A3.2 3.2 0 0 1 3.2 -3.5 V-1" fill="none" stroke="#c4c4c4" stroke-width="1.5"/><rect x="-4.7" y="-1.5" width="9.4" height="7.5" rx="0.8" fill="#c4c4c4"/></g><rect x="1161.5" y="203" width="15" height="8.5" fill="#fff" stroke="#000" stroke-width="1.2"/><g transform="translate(1422.7,207)"><path d="M-7 0 Q0 -7.5 7 0 Q0 7.5 -7 0 Z" fill="#000"/><ellipse cx="0" cy="0" rx="4.8" ry="3.4" fill="#fff"/><circle cx="0" cy="0.3" r="3" fill="#000"/><circle cx="-0.8" cy="-0.9" r="0.8" fill="#fff"/><path d="M-7.3 -0.6 Q0 -8 7.3 -0.6" fill="none" stroke="#000" stroke-width="1.6"/></g><g transform="translate(1444.8,207)"><path d="M-3.2 -1 V-3.5 A3.2 3.2 0 0 1 3.2 -3.5 V-1" fill="none" stroke="#c4c4c4" stroke-width="1.5"/><rect x="-4.7" y="-1.5" width="9.4" height="7.5" rx="0.8" fill="#c4c4c4"/></g><rect x="1161.5" y="223" width="15" height="8.5" fill="#008cff" stroke="#000" stroke-width="1.2"/><g transform="translate(1422.7,227)"><path d="M-7 0 Q0 -7.5 7 0 Q0 7.5 -7 0 Z" fill="#000"/><ellipse cx="0" cy="0" rx="4.8" ry="3.4" fill="#fff"/><circle cx="0" cy="0.3" r="3" fill="#000"/><circle cx="-0.8" cy="-0.9" r="0.8" fill="#fff"/><path d="M-7.3 -0.6 Q0 -8 7.3 -0.6" fill="none" stroke="#000" stroke-width="1.6"/></g><g transform="translate(1444.8,227)"><path d="M-3.2 -1 V-3.5 A3.2 3.2 0 0 1 3.2 -3.5 V-1" fill="none" stroke="#c4c4c4" stroke-width="1.5"/><rect x="-4.7" y="-1.5" width="9.4" height="7.5" rx="0.8" fill="#c4c4c4"/></g><rect x="1161.5" y="243" width="15" height="8.5" fill="#000" stroke="#000" stroke-width="1.2"/><g transform="translate(1422.7,247)"><path d="M-7 0 Q0 -7.5 7 0 Q0 7.5 -7 0 Z" fill="#000"/><ellipse cx="0" cy="0" rx="4.8" ry="3.4" fill="#fff"/><circle cx="0" cy="0.3" r="3" fill="#000"/><circle cx="-0.8" cy="-0.9" r="0.8" fill="#fff"/><path d="M-7.3 -0.6 Q0 -8 7.3 -0.6" fill="none" stroke="#000" stroke-width="1.6"/></g><g transform="translate(1444.8,247)"><path d="M-3.2 -1 V-3.5 A3.2 3.2 0 0 1 3.2 -3.5 V-1" fill="none" stroke="#c4c4c4" stroke-width="1.5"/><rect x="-4.7" y="-1.5" width="9.4" height="7.5" rx="0.8" fill="#c4c4c4"/></g><g transform="translate(1394,180)"><path d="M0 14 L2 9 L11.5 0.5 L14 3 L4.5 12 Z" fill="#e8a93a" stroke="#8a5a10" stroke-width="0.7"/><path d="M11.5 0.5 L14 3 L15 2 L12.5 -0.5 Z" fill="#e03030"/><path d="M0 14 L1 11.5 L2.5 13 Z" fill="#333"/></g></svg><div class="a" style="left:1183.3px;top:159.4px;font-size:13.4px;color:#111;line-height:16px">0</div><div class="a" style="left:1183.3px;top:179.4px;font-size:13.4px;color:#111;line-height:16px">Center</div><div class="a" style="left:1183.3px;top:199.4px;font-size:13.4px;color:#111;line-height:16px">Defpoints</div><div class="a" style="left:1183.3px;top:219.4px;font-size:13.4px;color:#111;line-height:16px">Dimensions</div><div class="a" style="left:1183.3px;top:239.4px;font-size:13.4px;color:#111;line-height:16px">Hidden</div><div class="a" style="left:1154.5px;top:156px;width:1px;height:642px;background:#bbb"></div><div class="a" style="left:1454px;top:108px;width:1px;height:690px;background:#c8c8c8"></div><div class="a" style="left:1455px;top:108px;width:45px;height:690px;background:linear-gradient(90deg,#f2f2f2,#e0e0e0 55%,#cdcdcd)"></div><div class="a" style="left:1463px;top:116px;width:2px;height:2px;background:#9a9a9a"></div><div class="a" style="left:1469px;top:116px;width:2px;height:2px;background:#9a9a9a"></div><div class="a" style="left:1475px;top:116px;width:2px;height:2px;background:#9a9a9a"></div><div class="a" style="left:1481px;top:116px;width:2px;height:2px;background:#9a9a9a"></div><div class="a" style="left:1487px;top:116px;width:2px;height:2px;background:#9a9a9a"></div><div class="a" style="left:1456px;top:120px;width:46px;height:42.5px;background:#b4b4b4;border-radius:5px"></div><div class="a" style="left:1456px;top:417.4px;width:46px;height:42px;background:#b4b4b4;border-radius:5px"></div><div class="a" style="left:1460px;top:261px;width:1px;height:1px;background:#555"></div><div class="a" style="left:1463px;top:261px;width:1px;height:1px;background:#555"></div><div class="a" style="left:1466px;top:261px;width:1px;height:1px;background:#555"></div><div class="a" style="left:1469px;top:261px;width:1px;height:1px;background:#555"></div><div class="a" style="left:1472px;top:261px;width:1px;height:1px;background:#555"></div><div class="a" style="left:1475px;top:261px;width:1px;height:1px;background:#555"></div><div class="a" style="left:1478px;top:261px;width:1px;height:1px;background:#555"></div><div class="a" style="left:1481px;top:261px;width:1px;height:1px;background:#555"></div><div class="a" style="left:1484px;top:261px;width:1px;height:1px;background:#555"></div><div class="a" style="left:1487px;top:261px;width:1px;height:1px;background:#555"></div><div class="a" style="left:1490px;top:261px;width:1px;height:1px;background:#555"></div><div class="a" style="left:1493px;top:261px;width:1px;height:1px;background:#555"></div><div class="a" style="left:1496px;top:261px;width:1px;height:1px;background:#555"></div><div class="a" style="left:1499px;top:261px;width:1px;height:1px;background:#555"></div><div class="a" style="left:1460px;top:409.5px;width:1px;height:1px;background:#555"></div><div class="a" style="left:1463px;top:409.5px;width:1px;height:1px;background:#555"></div><div class="a" style="left:1466px;top:409.5px;width:1px;height:1px;background:#555"></div><div class="a" style="left:1469px;top:409.5px;width:1px;height:1px;background:#555"></div><div class="a" style="left:1472px;top:409.5px;width:1px;height:1px;background:#555"></div><div class="a" style="left:1475px;top:409.5px;width:1px;height:1px;background:#555"></div><div class="a" style="left:1478px;top:409.5px;width:1px;height:1px;background:#555"></div><div class="a" style="left:1481px;top:409.5px;width:1px;height:1px;background:#555"></div><div class="a" style="left:1484px;top:409.5px;width:1px;height:1px;background:#555"></div><div class="a" style="left:1487px;top:409.5px;width:1px;height:1px;background:#555"></div><div class="a" style="left:1490px;top:409.5px;width:1px;height:1px;background:#555"></div><div class="a" style="left:1493px;top:409.5px;width:1px;height:1px;background:#555"></div><div class="a" style="left:1496px;top:409.5px;width:1px;height:1px;background:#555"></div><div class="a" style="left:1499px;top:409.5px;width:1px;height:1px;background:#555"></div><svg style="left:0;top:0" width="1" height="1"><rect x="1463.7" y="127.7" width="26.6" height="26.6" fill="#fff" stroke="#111" stroke-width="0.9"/><rect x="1463.2" y="127.2" width="27.6" height="4" fill="#000"/><rect x="1464.2" y="127.8" width="3.4" height="3.2" fill="#fff" stroke="#000" stroke-width="0.4"/><rect x="1463.7" y="174.6" width="26.6" height="26.6" fill="#fff" stroke="#111" stroke-width="0.9"/><rect x="1463.2" y="174.1" width="27.6" height="4" fill="#000"/><rect x="1464.2" y="174.7" width="3.4" height="3.2" fill="#fff" stroke="#000" stroke-width="0.4"/><rect x="1463.7" y="220.9" width="26.6" height="26.6" fill="#fff" stroke="#111" stroke-width="0.9"/><rect x="1463.2" y="220.4" width="27.6" height="4" fill="#000"/><rect x="1464.2" y="221.0" width="3.4" height="3.2" fill="#fff" stroke="#000" stroke-width="0.4"/><rect x="1463.7" y="275.8" width="26.6" height="26.6" fill="#fff" stroke="#111" stroke-width="0.9"/><rect x="1463.2" y="275.3" width="27.6" height="4" fill="#000"/><rect x="1464.2" y="275.90000000000003" width="3.4" height="3.2" fill="#fff" stroke="#000" stroke-width="0.4"/><rect x="1463.7" y="322.7" width="26.6" height="26.6" fill="#fff" stroke="#111" stroke-width="0.9"/><rect x="1463.2" y="322.2" width="27.6" height="4" fill="#000"/><rect x="1464.2" y="322.8" width="3.4" height="3.2" fill="#fff" stroke="#000" stroke-width="0.4"/><rect x="1463.7" y="369.1" width="26.6" height="26.6" fill="#fff" stroke="#111" stroke-width="0.9"/><rect x="1463.2" y="368.6" width="27.6" height="4" fill="#000"/><rect x="1464.2" y="369.20000000000005" width="3.4" height="3.2" fill="#fff" stroke="#000" stroke-width="0.4"/><rect x="1463.7" y="424.3" width="26.6" height="26.6" fill="#fff" stroke="#111" stroke-width="0.9"/><rect x="1463.2" y="423.8" width="27.6" height="4" fill="#000"/><rect x="1464.2" y="424.40000000000003" width="3.4" height="3.2" fill="#fff" stroke="#000" stroke-width="0.4"/><rect x="1463.7" y="471.3" width="26.6" height="26.6" fill="#fff" stroke="#111" stroke-width="0.9"/><rect x="1463.2" y="470.8" width="27.6" height="4" fill="#000"/><rect x="1464.2" y="471.40000000000003" width="3.4" height="3.2" fill="#fff" stroke="#000" stroke-width="0.4"/><path d="M1470.5 139.7 L1477 136.7 V146.7 L1470.5 149.7 Z" fill="#aaa" stroke="#333" stroke-width="0.6"/><path d="M1473 138.7 L1482.5 134.7 V145.2 L1473 149.2 Z" fill="#fff" stroke="#444" stroke-width="0.6"/><path d="M1475.5 145.7 L1479 139.2 L1480 144.2 Z" fill="none" stroke="#e03030" stroke-width="0.8"/><rect x="1470" y="183.79999999999998" width="10.8" height="7.2" fill="#f2e6b8" stroke="#666" stroke-width="0.7"/><circle cx="1479" cy="191.0" r="4.4" fill="#f2e6b8" fill-opacity="0.85" stroke="#666" stroke-width="0.7"/><rect x="1469" y="230.4" width="16" height="12" rx="2" fill="#f6f6f6" stroke="#b8c8e0" stroke-width="0.9"/><rect x="1466.5" y="282.8" width="3.6" height="3" fill="#000"/><rect x="1472.8" y="283.1" width="14.5" height="2.6" fill="none" stroke="#333" stroke-width="0.7"/><rect x="1466.5" y="288.40000000000003" width="3.6" height="3" fill="#000"/><rect x="1472.8" y="288.70000000000005" width="14.5" height="2.6" fill="none" stroke="#333" stroke-width="0.7"/><rect x="1466.5" y="294.0" width="3.6" height="3" fill="#000"/><rect x="1472.8" y="294.3" width="14.5" height="2.6" fill="none" stroke="#333" stroke-width="0.7"/><defs><linearGradient id="fun" x1="0" x2="1"><stop offset="0" stop-color="#888"/><stop offset="0.5" stop-color="#ddd"/><stop offset="1" stop-color="#777"/></linearGradient></defs><ellipse cx="1477" cy="331.7" rx="8.5" ry="1.6" fill="#999"/><path d="M1468.5 331.7 Q1477 334.2 1485.5 331.7 L1479 338.7 V344.7 Q1477 345.7 1475 344.7 V338.7 Z" fill="url(#fun)"/><path d="M1469 376.6 L1474 381.1 V389.1 L1469 393.6 Z" fill="#f4f4f4" stroke="#333" stroke-width="0.8"/><rect x="1474" y="380.6" width="9" height="9" rx="1.5" fill="#aaa" stroke="#444" stroke-width="0.7"/><path d="M1476 380.6 v9 M1478 380.6 v9 M1480 380.6 v9" stroke="#666" stroke-width="0.5"/><line x1="1468" y1="385.1" x2="1487" y2="385.1" stroke="#e05050" stroke-width="0.7" stroke-dasharray="1.5 1"/><rect x="1466" y="431.8" width="11" height="0.9" fill="#777"/><rect x="1466" y="435.1" width="10" height="0.9" fill="#777"/><rect x="1466" y="438.40000000000003" width="12" height="0.9" fill="#777"/><rect x="1466" y="441.7" width="11" height="0.9" fill="#777"/><rect x="1464" y="446.1" width="26" height="0.7" fill="#555"/><rect x="1466" y="447.8" width="1.5" height="1.5" fill="#333"/><rect x="1471" y="448.0" width="15" height="1.2" fill="#555"/><rect x="1468.5" y="478.8" width="17" height="17" rx="1" fill="#c88a2a" stroke="#8a5a10" stroke-width="0.7"/><rect x="1470.5" y="480.8" width="13" height="13.5" fill="#f6f6f6"/><path d="M1472 483.8 h10 M1472 486.3 h10 M1472 488.8 h8" stroke="#bbb" stroke-width="0.8"/><rect x="1473" y="477.3" width="8" height="3.5" rx="0.8" fill="#999" stroke="#666" stroke-width="0.5"/></svg><div class="a" style="left:0;top:798px;width:1500px;height:46px;background:#dcdcdc"></div><div class="a" style="left:2.2px;top:806px;font-size:9.7px;letter-spacing:0.2px;color:#111;white-space:nowrap">47.3607,60.0448</div><div class="a" style="left:2.2px;top:826px;font-size:9.7px;letter-spacing:0.2px;color:#111;white-space:nowrap">@47.3607,60.0448</div><div class="a" style="left:253.3px;top:802.5px;width:1px;height:39px;background:#8a8a8a"></div><div class="a" style="left:256px;top:806px;font-size:9.7px;letter-spacing:0.2px;color:#111;white-space:nowrap">76.4749&lt;52°</div><div class="a" style="left:256px;top:826px;font-size:9.7px;letter-spacing:0.2px;color:#111;white-space:nowrap">@76.4749&lt;52°</div><div class="a" style="left:572px;top:816px;font-size:9.7px;letter-spacing:0.2px;color:#111;white-space:nowrap">Selezionare entità o regione</div><div class="a" style="left:949.3px;top:816px;font-size:9.7px;letter-spacing:0.2px;color:#111;white-space:nowrap">Nessun entità selezionate.</div><div class="a" style="left:506.4px;top:819px;width:6px;height:6px;border-radius:3px;background:#c4c4c4"></div><div class="a" style="left:940.2px;top:819px;width:6px;height:6px;border-radius:3px;background:#c4c4c4"></div><div class="a" style="left:1269.5px;top:819px;width:6px;height:6px;border-radius:3px;background:#c4c4c4"></div><svg style="left:717px;top:806px" width="19" height="30"><rect x="0.6" y="0.6" width="17.4" height="28.6" rx="8.7" fill="#fff" stroke="#333" stroke-width="1"/><path d="M1 12.5 Q9.3 10 17.6 12.5" fill="none" stroke="#333" stroke-width="1.4"/><rect x="7.3" y="3.3" width="4" height="7" rx="2" fill="#fff" stroke="#333" stroke-width="0.9"/><line x1="9.3" y1="10.3" x2="9.3" y2="11.5" stroke="#333"/></svg></body></html>
